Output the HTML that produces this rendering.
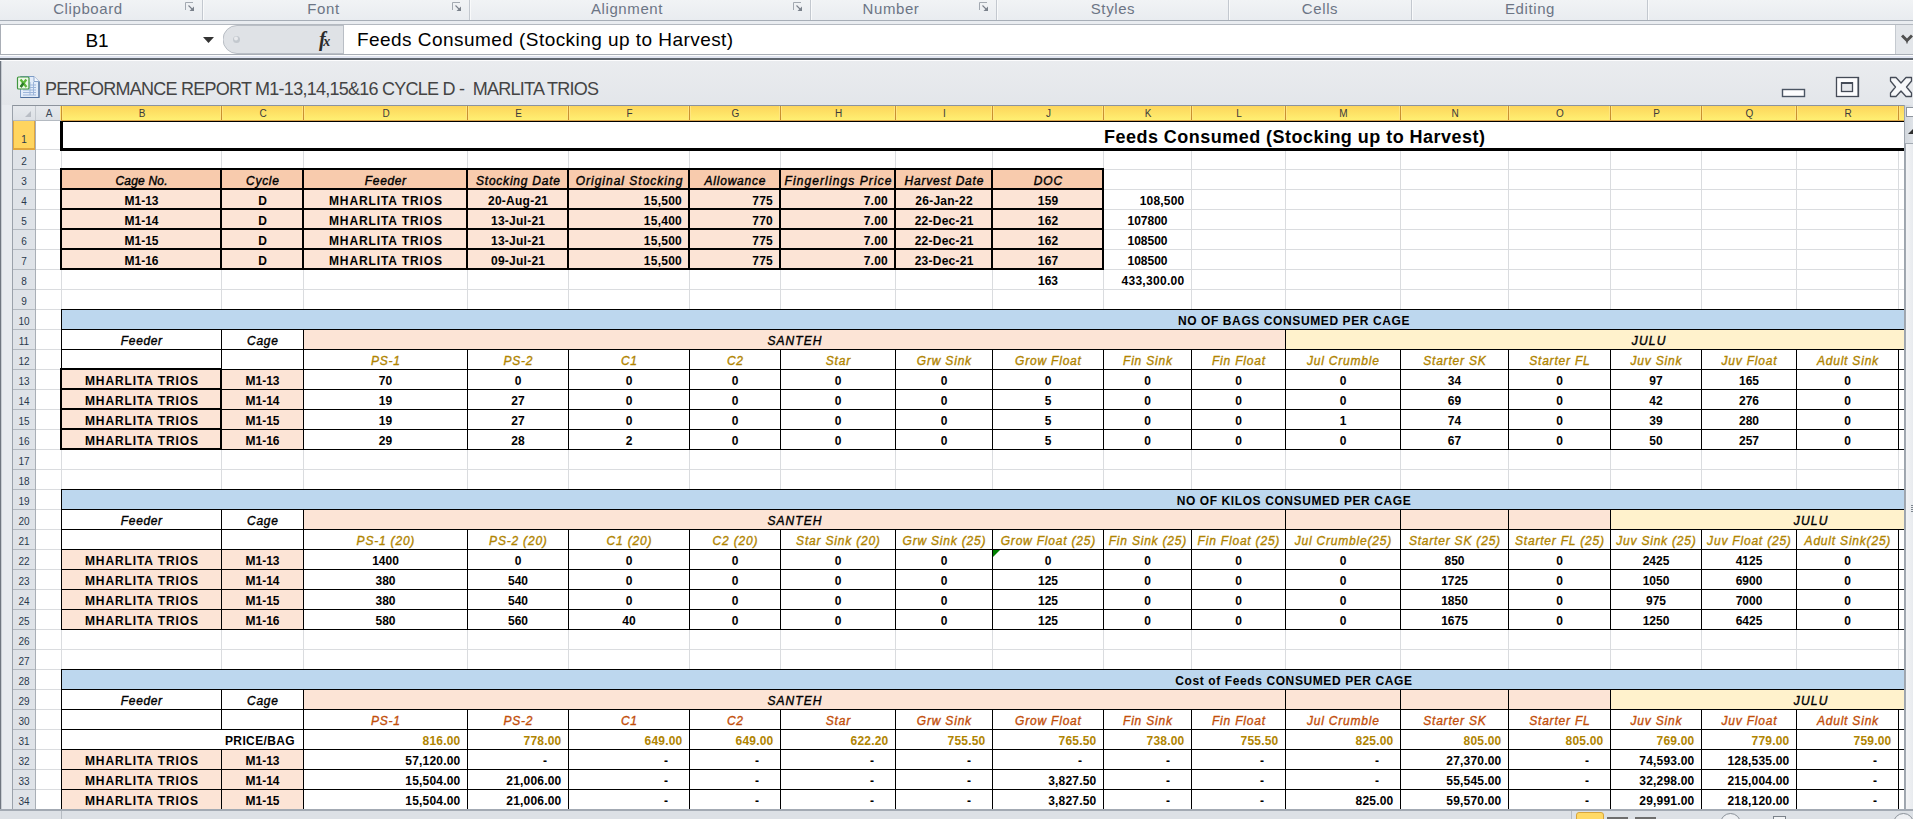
<!DOCTYPE html><html><head><meta charset="utf-8"><style>
html,body{margin:0;padding:0;overflow:hidden;}
body{width:1913px;height:819px;overflow:hidden;position:relative;background:#e8ebef;font-family:"Liberation Sans",sans-serif;}
div{position:absolute;}
.t{white-space:nowrap;overflow:visible;}
</style></head><body>
<div style="left:0;top:0;width:1913px;height:20px;background:linear-gradient(#f1f3f5,#e9ecf0);"></div>
<div style="left:0px;top:20px;width:1913px;height:1px;background:#a7aeb7;"></div>
<div style="left:0px;top:21px;width:1913px;height:3px;background:#e9ecf0;"></div>
<div class="t" style="left:-12px;top:-1.3px;width:200px;height:20px;line-height:20px;text-align:center;font-size:15px;color:#6c7585;letter-spacing:0.6px;">Clipboard</div>
<div class="t" style="left:223.5px;top:-1.3px;width:200px;height:20px;line-height:20px;text-align:center;font-size:15px;color:#6c7585;letter-spacing:0.6px;">Font</div>
<div class="t" style="left:527px;top:-1.3px;width:200px;height:20px;line-height:20px;text-align:center;font-size:15px;color:#6c7585;letter-spacing:0.6px;">Alignment</div>
<div class="t" style="left:791px;top:-1.3px;width:200px;height:20px;line-height:20px;text-align:center;font-size:15px;color:#6c7585;letter-spacing:0.6px;">Number</div>
<div class="t" style="left:1013px;top:-1.3px;width:200px;height:20px;line-height:20px;text-align:center;font-size:15px;color:#6c7585;letter-spacing:0.6px;">Styles</div>
<div class="t" style="left:1220px;top:-1.3px;width:200px;height:20px;line-height:20px;text-align:center;font-size:15px;color:#6c7585;letter-spacing:0.6px;">Cells</div>
<div class="t" style="left:1430px;top:-1.3px;width:200px;height:20px;line-height:20px;text-align:center;font-size:15px;color:#6c7585;letter-spacing:0.6px;">Editing</div>
<div style="left:202px;top:0px;width:1px;height:20px;background:#c3c8cf;"></div>
<div style="left:203px;top:0px;width:1px;height:20px;background:#f9fafb;"></div>
<div style="left:469px;top:0px;width:1px;height:20px;background:#c3c8cf;"></div>
<div style="left:470px;top:0px;width:1px;height:20px;background:#f9fafb;"></div>
<div style="left:810px;top:0px;width:1px;height:20px;background:#c3c8cf;"></div>
<div style="left:811px;top:0px;width:1px;height:20px;background:#f9fafb;"></div>
<div style="left:996px;top:0px;width:1px;height:20px;background:#c3c8cf;"></div>
<div style="left:997px;top:0px;width:1px;height:20px;background:#f9fafb;"></div>
<div style="left:1228px;top:0px;width:1px;height:20px;background:#c3c8cf;"></div>
<div style="left:1229px;top:0px;width:1px;height:20px;background:#f9fafb;"></div>
<div style="left:1411px;top:0px;width:1px;height:20px;background:#c3c8cf;"></div>
<div style="left:1412px;top:0px;width:1px;height:20px;background:#f9fafb;"></div>
<div style="left:1647px;top:0px;width:1px;height:20px;background:#c3c8cf;"></div>
<div style="left:1648px;top:0px;width:1px;height:20px;background:#f9fafb;"></div>
<svg style="position:absolute;left:185px;top:2px" width="10" height="10" viewBox="0 0 10 10"><path d="M0.5 8V0.5H8" fill="none" stroke="#a3a9b1" stroke-width="1"/><path d="M3.5 3.5L7 7" fill="none" stroke="#7a818b" stroke-width="1.1"/><path d="M9 4.5V9H4.5Z" fill="#7a818b"/></svg>
<svg style="position:absolute;left:452px;top:2px" width="10" height="10" viewBox="0 0 10 10"><path d="M0.5 8V0.5H8" fill="none" stroke="#a3a9b1" stroke-width="1"/><path d="M3.5 3.5L7 7" fill="none" stroke="#7a818b" stroke-width="1.1"/><path d="M9 4.5V9H4.5Z" fill="#7a818b"/></svg>
<svg style="position:absolute;left:793px;top:2px" width="10" height="10" viewBox="0 0 10 10"><path d="M0.5 8V0.5H8" fill="none" stroke="#a3a9b1" stroke-width="1"/><path d="M3.5 3.5L7 7" fill="none" stroke="#7a818b" stroke-width="1.1"/><path d="M9 4.5V9H4.5Z" fill="#7a818b"/></svg>
<svg style="position:absolute;left:979px;top:2px" width="10" height="10" viewBox="0 0 10 10"><path d="M0.5 8V0.5H8" fill="none" stroke="#a3a9b1" stroke-width="1"/><path d="M3.5 3.5L7 7" fill="none" stroke="#7a818b" stroke-width="1.1"/><path d="M9 4.5V9H4.5Z" fill="#7a818b"/></svg>
<div style="left:0px;top:24px;width:1913px;height:1px;background:#b4b9c0;"></div>
<div style="left:0px;top:25px;width:1913px;height:29px;background:#ffffff;"></div>
<div style="left:0px;top:54px;width:1913px;height:1px;background:#a9aeb6;"></div>
<div style="left:0px;top:24px;width:1px;height:31px;background:#a9aeb6;"></div>
<div style="left:0px;top:55px;width:1913px;height:1px;background:#fbfcfd;"></div>
<div style="left:0px;top:56px;width:1913px;height:2px;background:#e0e4f0;"></div>
<div style="left:0px;top:58px;width:1913px;height:2px;background:#606770;"></div>
<div style="left:0px;top:60px;width:1913px;height:1px;background:#fdfdfe;"></div>
<div class="t" style="left:60px;top:29px;width:74px;height:24px;line-height:24px;text-align:center;font-size:19px;color:#000;">B1</div>
<svg style="position:absolute;left:202px;top:36px" width="13" height="8"><path d="M1 1H12L6.5 7Z" fill="#333"/></svg>
<svg style="position:absolute;left:223px;top:25px" width="121" height="29"><path d="M14 0.5H121V28.5H14A13.5 13.5 0 0 1 14 0.5Z" fill="#dfe2e6" stroke="#b9bec5" stroke-width="1"/><circle cx="13.5" cy="14.5" r="3.5" fill="#c3c8ce"/><circle cx="13" cy="13.5" r="2" fill="#e8eaed"/></svg>
<div style="left:343px;top:25px;width:1px;height:29px;background:#b9bec5;"></div>
<div class="t" style="left:319px;top:27px;width:24px;height:24px;line-height:24px;font-family:'Liberation Serif',serif;font-style:italic;font-weight:bold;font-size:20px;color:#2b2b2b;letter-spacing:-2.5px;">f<span style="font-size:14px">x</span></div>
<div class="t" style="left:357px;top:27px;width:600px;height:26px;line-height:26px;font-size:19px;color:#000;letter-spacing:0.45px;">Feeds Consumed (Stocking up to Harvest)</div>
<div style="left:1895px;top:25px;width:18px;height:29px;background:#e3e6ea;"></div>
<div style="left:1895px;top:25px;width:1px;height:29px;background:#c5cad0;"></div>
<svg style="position:absolute;left:1901px;top:34px" width="12" height="10"><path d="M1 1.5L6 6.5L11 1.5" fill="none" stroke="#505050" stroke-width="3"/><path d="M6 6V9.5" stroke="#505050" stroke-width="1.2"/></svg>
<div style="left:0;top:61px;width:1913px;height:44px;background:linear-gradient(#eaecef,#e3e6ea);"></div>
<div style="left:0px;top:61px;width:1px;height:758px;background:#6f7680;"></div>
<div style="left:1px;top:61px;width:1px;height:758px;background:#c8cdd3;"></div>
<svg style="position:absolute;left:14px;top:72px" width="30" height="30" viewBox="0 0 30 30">
<path d="M6.5 4.5H20L25 9.5V25.5H6.5Z" fill="#e3ecf9" stroke="#7d9cc6" stroke-width="1"/>
<path d="M25 9.5V25.5H6.5" fill="none" stroke="#4f6f9c" stroke-width="1.2"/>
<path d="M20 4.5V9.5H25" fill="#f4f7fc" stroke="#8aa5cb" stroke-width="1"/>
<path d="M16 10V23M19.5 10V23M9 18H22M9 20.5H22M9 23H22M16 13H22M16 15.5H22" stroke="#9cb5da" stroke-width="1"/>
<rect x="3.5" y="5" width="11.5" height="12" rx="1" fill="#eef8ea" stroke="#3f963f" stroke-width="1.2"/>
<path d="M6.5 7.5L12.5 15M12.3 7.5L6.7 15" stroke="#5cb83a" stroke-width="2.3"/>
<path d="M9.5 11L6.7 15" stroke="#2c7a2c" stroke-width="2.3"/>
</svg>
<div class="t" style="left:45px;top:75.5px;width:700px;height:26px;line-height:26px;font-size:18px;color:#444;letter-spacing:-0.75px;">PERFORMANCE REPORT M1-13,14,15&amp;16 CYCLE D -&nbsp; MARLITA TRIOS</div>
<svg style="position:absolute;left:1781px;top:88px" width="26" height="10"><rect x="1.5" y="1.5" width="22" height="7" fill="#fdfdfe" stroke="#4b5563" stroke-width="1.4"/></svg>
<svg style="position:absolute;left:1835px;top:76px" width="26" height="22"><rect x="1.5" y="1.5" width="22" height="19" fill="#fdfdfe" stroke="#454b57" stroke-width="1.3"/><rect x="22.5" y="1.5" width="1.5" height="19" fill="#454b57"/><rect x="6.5" y="6.8" width="11" height="8.7" fill="#e4e6ea" stroke="#454b57" stroke-width="1.3"/><rect x="6" y="6" width="12" height="2" fill="#454b57"/></svg>
<svg style="position:absolute;left:1888px;top:75px" width="25" height="24"><path d="M2.5 2.5H8L13 8L18 2.5H23.5V6L18.5 12L23.5 18V21.5H18L13 16L8 21.5H2.5V18L7.5 12L2.5 6Z" fill="#f7f8fa" stroke="#454b57" stroke-width="1.3" stroke-linejoin="round"/></svg>
<div style="left:12px;top:105px;width:1892px;height:1px;background:#8c939c;"></div>
<div style="left:12px;top:105px;width:1px;height:704px;background:#9aa1aa;"></div>
<div style="left:13px;top:121px;width:1891px;height:688px;background:#ffffff;"></div>
<div style="left:13px;top:106px;width:48px;height:14px;background:linear-gradient(#e6e9ed,#dde1e6);"></div>
<div style="left:61px;top:106px;width:1843px;height:14px;background:linear-gradient(#fdd55b,#ffef72);"></div>
<div style="left:13px;top:120px;width:48px;height:1px;background:#b4bac1;"></div>
<div style="left:61px;top:120px;width:1843px;height:1px;background:#d9a447;"></div>
<div style="left:35px;top:106px;width:1px;height:14px;background:#c4c9cf;"></div>
<div style="left:61px;top:106px;width:1px;height:14px;background:#c9912f;"></div>
<div style="left:60px;top:106px;width:1px;height:14px;background:#ffe680;"></div>
<div style="left:62px;top:106px;width:1px;height:14px;background:#ffe680;"></div>
<div style="left:221px;top:106px;width:1px;height:14px;background:#c9912f;"></div>
<div style="left:220px;top:106px;width:1px;height:14px;background:#ffe680;"></div>
<div style="left:222px;top:106px;width:1px;height:14px;background:#ffe680;"></div>
<div style="left:303px;top:106px;width:1px;height:14px;background:#c9912f;"></div>
<div style="left:302px;top:106px;width:1px;height:14px;background:#ffe680;"></div>
<div style="left:304px;top:106px;width:1px;height:14px;background:#ffe680;"></div>
<div style="left:467px;top:106px;width:1px;height:14px;background:#c9912f;"></div>
<div style="left:466px;top:106px;width:1px;height:14px;background:#ffe680;"></div>
<div style="left:468px;top:106px;width:1px;height:14px;background:#ffe680;"></div>
<div style="left:568px;top:106px;width:1px;height:14px;background:#c9912f;"></div>
<div style="left:567px;top:106px;width:1px;height:14px;background:#ffe680;"></div>
<div style="left:569px;top:106px;width:1px;height:14px;background:#ffe680;"></div>
<div style="left:689px;top:106px;width:1px;height:14px;background:#c9912f;"></div>
<div style="left:688px;top:106px;width:1px;height:14px;background:#ffe680;"></div>
<div style="left:690px;top:106px;width:1px;height:14px;background:#ffe680;"></div>
<div style="left:780px;top:106px;width:1px;height:14px;background:#c9912f;"></div>
<div style="left:779px;top:106px;width:1px;height:14px;background:#ffe680;"></div>
<div style="left:781px;top:106px;width:1px;height:14px;background:#ffe680;"></div>
<div style="left:895px;top:106px;width:1px;height:14px;background:#c9912f;"></div>
<div style="left:894px;top:106px;width:1px;height:14px;background:#ffe680;"></div>
<div style="left:896px;top:106px;width:1px;height:14px;background:#ffe680;"></div>
<div style="left:992px;top:106px;width:1px;height:14px;background:#c9912f;"></div>
<div style="left:991px;top:106px;width:1px;height:14px;background:#ffe680;"></div>
<div style="left:993px;top:106px;width:1px;height:14px;background:#ffe680;"></div>
<div style="left:1103px;top:106px;width:1px;height:14px;background:#c9912f;"></div>
<div style="left:1102px;top:106px;width:1px;height:14px;background:#ffe680;"></div>
<div style="left:1104px;top:106px;width:1px;height:14px;background:#ffe680;"></div>
<div style="left:1191px;top:106px;width:1px;height:14px;background:#c9912f;"></div>
<div style="left:1190px;top:106px;width:1px;height:14px;background:#ffe680;"></div>
<div style="left:1192px;top:106px;width:1px;height:14px;background:#ffe680;"></div>
<div style="left:1285px;top:106px;width:1px;height:14px;background:#c9912f;"></div>
<div style="left:1284px;top:106px;width:1px;height:14px;background:#ffe680;"></div>
<div style="left:1286px;top:106px;width:1px;height:14px;background:#ffe680;"></div>
<div style="left:1400px;top:106px;width:1px;height:14px;background:#c9912f;"></div>
<div style="left:1399px;top:106px;width:1px;height:14px;background:#ffe680;"></div>
<div style="left:1401px;top:106px;width:1px;height:14px;background:#ffe680;"></div>
<div style="left:1508px;top:106px;width:1px;height:14px;background:#c9912f;"></div>
<div style="left:1507px;top:106px;width:1px;height:14px;background:#ffe680;"></div>
<div style="left:1509px;top:106px;width:1px;height:14px;background:#ffe680;"></div>
<div style="left:1610px;top:106px;width:1px;height:14px;background:#c9912f;"></div>
<div style="left:1609px;top:106px;width:1px;height:14px;background:#ffe680;"></div>
<div style="left:1611px;top:106px;width:1px;height:14px;background:#ffe680;"></div>
<div style="left:1701px;top:106px;width:1px;height:14px;background:#c9912f;"></div>
<div style="left:1700px;top:106px;width:1px;height:14px;background:#ffe680;"></div>
<div style="left:1702px;top:106px;width:1px;height:14px;background:#ffe680;"></div>
<div style="left:1796px;top:106px;width:1px;height:14px;background:#c9912f;"></div>
<div style="left:1795px;top:106px;width:1px;height:14px;background:#ffe680;"></div>
<div style="left:1797px;top:106px;width:1px;height:14px;background:#ffe680;"></div>
<div style="left:1898px;top:106px;width:1px;height:14px;background:#c9912f;"></div>
<div style="left:1897px;top:106px;width:1px;height:14px;background:#ffe680;"></div>
<div style="left:1899px;top:106px;width:1px;height:14px;background:#ffe680;"></div>
<svg style="position:absolute;left:25px;top:111px" width="7" height="7"><path d="M6 0V6H0Z" fill="#b9bec5"/></svg>
<div class="t" style="left:36px;top:103.69px;width:26px;height:20px;line-height:20px;font-size:10px;text-align:center;color:#3b4656;">A</div>
<div class="t" style="left:62px;top:104.19px;width:160px;height:20px;line-height:20px;font-size:10px;text-align:center;color:#3b3b3b;">B</div>
<div class="t" style="left:222px;top:104.19px;width:82px;height:20px;line-height:20px;font-size:10px;text-align:center;color:#3b3b3b;">C</div>
<div class="t" style="left:304px;top:104.19px;width:164px;height:20px;line-height:20px;font-size:10px;text-align:center;color:#3b3b3b;">D</div>
<div class="t" style="left:468px;top:104.19px;width:101px;height:20px;line-height:20px;font-size:10px;text-align:center;color:#3b3b3b;">E</div>
<div class="t" style="left:569px;top:104.19px;width:121px;height:20px;line-height:20px;font-size:10px;text-align:center;color:#3b3b3b;">F</div>
<div class="t" style="left:690px;top:104.19px;width:91px;height:20px;line-height:20px;font-size:10px;text-align:center;color:#3b3b3b;">G</div>
<div class="t" style="left:781px;top:104.19px;width:115px;height:20px;line-height:20px;font-size:10px;text-align:center;color:#3b3b3b;">H</div>
<div class="t" style="left:896px;top:104.19px;width:97px;height:20px;line-height:20px;font-size:10px;text-align:center;color:#3b3b3b;">I</div>
<div class="t" style="left:993px;top:104.19px;width:111px;height:20px;line-height:20px;font-size:10px;text-align:center;color:#3b3b3b;">J</div>
<div class="t" style="left:1104px;top:104.19px;width:88px;height:20px;line-height:20px;font-size:10px;text-align:center;color:#3b3b3b;">K</div>
<div class="t" style="left:1192px;top:104.19px;width:94px;height:20px;line-height:20px;font-size:10px;text-align:center;color:#3b3b3b;">L</div>
<div class="t" style="left:1286px;top:104.19px;width:115px;height:20px;line-height:20px;font-size:10px;text-align:center;color:#3b3b3b;">M</div>
<div class="t" style="left:1401px;top:104.19px;width:108px;height:20px;line-height:20px;font-size:10px;text-align:center;color:#3b3b3b;">N</div>
<div class="t" style="left:1509px;top:104.19px;width:102px;height:20px;line-height:20px;font-size:10px;text-align:center;color:#3b3b3b;">O</div>
<div class="t" style="left:1611px;top:104.19px;width:91px;height:20px;line-height:20px;font-size:10px;text-align:center;color:#3b3b3b;">P</div>
<div class="t" style="left:1702px;top:104.19px;width:95px;height:20px;line-height:20px;font-size:10px;text-align:center;color:#3b3b3b;">Q</div>
<div class="t" style="left:1797px;top:104.19px;width:102px;height:20px;line-height:20px;font-size:10px;text-align:center;color:#3b3b3b;">R</div>
<div style="left:13px;top:121px;width:22px;height:688px;background:#dfe3e8;"></div>
<div style="left:35px;top:121px;width:1px;height:688px;background:#a9afb6;"></div>
<div style="left:13px;top:121px;width:22px;height:28px;background:#ffd55f;"></div>
<div style="left:13px;top:121px;width:1px;height:28px;background:#e0a53c;"></div>
<div style="left:34px;top:121px;width:1px;height:28px;background:#e0a53c;"></div>
<div style="left:13px;top:148px;width:22px;height:1px;background:#e0a53c;"></div>
<div style="left:13px;top:149px;width:22px;height:1px;background:#e0a53c;"></div>
<div class="t" style="left:13px;top:129.69px;width:22px;height:20px;line-height:20px;font-size:10px;text-align:center;color:#2a394c;">1</div>
<div style="left:13px;top:169px;width:22px;height:1px;background:#b3b9c0;"></div>
<div class="t" style="left:13px;top:151.69px;width:22px;height:20px;line-height:20px;font-size:10px;text-align:center;color:#2a394c;">2</div>
<div style="left:13px;top:189px;width:22px;height:1px;background:#b3b9c0;"></div>
<div class="t" style="left:13px;top:171.69px;width:22px;height:20px;line-height:20px;font-size:10px;text-align:center;color:#2a394c;">3</div>
<div style="left:13px;top:209px;width:22px;height:1px;background:#b3b9c0;"></div>
<div class="t" style="left:13px;top:191.69px;width:22px;height:20px;line-height:20px;font-size:10px;text-align:center;color:#2a394c;">4</div>
<div style="left:13px;top:229px;width:22px;height:1px;background:#b3b9c0;"></div>
<div class="t" style="left:13px;top:211.69px;width:22px;height:20px;line-height:20px;font-size:10px;text-align:center;color:#2a394c;">5</div>
<div style="left:13px;top:249px;width:22px;height:1px;background:#b3b9c0;"></div>
<div class="t" style="left:13px;top:231.69px;width:22px;height:20px;line-height:20px;font-size:10px;text-align:center;color:#2a394c;">6</div>
<div style="left:13px;top:269px;width:22px;height:1px;background:#b3b9c0;"></div>
<div class="t" style="left:13px;top:251.69px;width:22px;height:20px;line-height:20px;font-size:10px;text-align:center;color:#2a394c;">7</div>
<div style="left:13px;top:289px;width:22px;height:1px;background:#b3b9c0;"></div>
<div class="t" style="left:13px;top:271.69px;width:22px;height:20px;line-height:20px;font-size:10px;text-align:center;color:#2a394c;">8</div>
<div style="left:13px;top:309px;width:22px;height:1px;background:#b3b9c0;"></div>
<div class="t" style="left:13px;top:291.69px;width:22px;height:20px;line-height:20px;font-size:10px;text-align:center;color:#2a394c;">9</div>
<div style="left:13px;top:329px;width:22px;height:1px;background:#b3b9c0;"></div>
<div class="t" style="left:13px;top:311.69px;width:22px;height:20px;line-height:20px;font-size:10px;text-align:center;color:#2a394c;">10</div>
<div style="left:13px;top:349px;width:22px;height:1px;background:#b3b9c0;"></div>
<div class="t" style="left:13px;top:331.69px;width:22px;height:20px;line-height:20px;font-size:10px;text-align:center;color:#2a394c;">11</div>
<div style="left:13px;top:369px;width:22px;height:1px;background:#b3b9c0;"></div>
<div class="t" style="left:13px;top:351.69px;width:22px;height:20px;line-height:20px;font-size:10px;text-align:center;color:#2a394c;">12</div>
<div style="left:13px;top:389px;width:22px;height:1px;background:#b3b9c0;"></div>
<div class="t" style="left:13px;top:371.69px;width:22px;height:20px;line-height:20px;font-size:10px;text-align:center;color:#2a394c;">13</div>
<div style="left:13px;top:409px;width:22px;height:1px;background:#b3b9c0;"></div>
<div class="t" style="left:13px;top:391.69px;width:22px;height:20px;line-height:20px;font-size:10px;text-align:center;color:#2a394c;">14</div>
<div style="left:13px;top:429px;width:22px;height:1px;background:#b3b9c0;"></div>
<div class="t" style="left:13px;top:411.69px;width:22px;height:20px;line-height:20px;font-size:10px;text-align:center;color:#2a394c;">15</div>
<div style="left:13px;top:449px;width:22px;height:1px;background:#b3b9c0;"></div>
<div class="t" style="left:13px;top:431.69px;width:22px;height:20px;line-height:20px;font-size:10px;text-align:center;color:#2a394c;">16</div>
<div style="left:13px;top:469px;width:22px;height:1px;background:#b3b9c0;"></div>
<div class="t" style="left:13px;top:451.69px;width:22px;height:20px;line-height:20px;font-size:10px;text-align:center;color:#2a394c;">17</div>
<div style="left:13px;top:489px;width:22px;height:1px;background:#b3b9c0;"></div>
<div class="t" style="left:13px;top:471.69px;width:22px;height:20px;line-height:20px;font-size:10px;text-align:center;color:#2a394c;">18</div>
<div style="left:13px;top:509px;width:22px;height:1px;background:#b3b9c0;"></div>
<div class="t" style="left:13px;top:491.69px;width:22px;height:20px;line-height:20px;font-size:10px;text-align:center;color:#2a394c;">19</div>
<div style="left:13px;top:529px;width:22px;height:1px;background:#b3b9c0;"></div>
<div class="t" style="left:13px;top:511.69px;width:22px;height:20px;line-height:20px;font-size:10px;text-align:center;color:#2a394c;">20</div>
<div style="left:13px;top:549px;width:22px;height:1px;background:#b3b9c0;"></div>
<div class="t" style="left:13px;top:531.70px;width:22px;height:20px;line-height:20px;font-size:10px;text-align:center;color:#2a394c;">21</div>
<div style="left:13px;top:569px;width:22px;height:1px;background:#b3b9c0;"></div>
<div class="t" style="left:13px;top:551.70px;width:22px;height:20px;line-height:20px;font-size:10px;text-align:center;color:#2a394c;">22</div>
<div style="left:13px;top:589px;width:22px;height:1px;background:#b3b9c0;"></div>
<div class="t" style="left:13px;top:571.70px;width:22px;height:20px;line-height:20px;font-size:10px;text-align:center;color:#2a394c;">23</div>
<div style="left:13px;top:609px;width:22px;height:1px;background:#b3b9c0;"></div>
<div class="t" style="left:13px;top:591.70px;width:22px;height:20px;line-height:20px;font-size:10px;text-align:center;color:#2a394c;">24</div>
<div style="left:13px;top:629px;width:22px;height:1px;background:#b3b9c0;"></div>
<div class="t" style="left:13px;top:611.70px;width:22px;height:20px;line-height:20px;font-size:10px;text-align:center;color:#2a394c;">25</div>
<div style="left:13px;top:649px;width:22px;height:1px;background:#b3b9c0;"></div>
<div class="t" style="left:13px;top:631.70px;width:22px;height:20px;line-height:20px;font-size:10px;text-align:center;color:#2a394c;">26</div>
<div style="left:13px;top:669px;width:22px;height:1px;background:#b3b9c0;"></div>
<div class="t" style="left:13px;top:651.70px;width:22px;height:20px;line-height:20px;font-size:10px;text-align:center;color:#2a394c;">27</div>
<div style="left:13px;top:689px;width:22px;height:1px;background:#b3b9c0;"></div>
<div class="t" style="left:13px;top:671.70px;width:22px;height:20px;line-height:20px;font-size:10px;text-align:center;color:#2a394c;">28</div>
<div style="left:13px;top:709px;width:22px;height:1px;background:#b3b9c0;"></div>
<div class="t" style="left:13px;top:691.70px;width:22px;height:20px;line-height:20px;font-size:10px;text-align:center;color:#2a394c;">29</div>
<div style="left:13px;top:729px;width:22px;height:1px;background:#b3b9c0;"></div>
<div class="t" style="left:13px;top:711.70px;width:22px;height:20px;line-height:20px;font-size:10px;text-align:center;color:#2a394c;">30</div>
<div style="left:13px;top:749px;width:22px;height:1px;background:#b3b9c0;"></div>
<div class="t" style="left:13px;top:731.70px;width:22px;height:20px;line-height:20px;font-size:10px;text-align:center;color:#2a394c;">31</div>
<div style="left:13px;top:769px;width:22px;height:1px;background:#b3b9c0;"></div>
<div class="t" style="left:13px;top:751.70px;width:22px;height:20px;line-height:20px;font-size:10px;text-align:center;color:#2a394c;">32</div>
<div style="left:13px;top:789px;width:22px;height:1px;background:#b3b9c0;"></div>
<div class="t" style="left:13px;top:771.70px;width:22px;height:20px;line-height:20px;font-size:10px;text-align:center;color:#2a394c;">33</div>
<div style="left:13px;top:809px;width:22px;height:1px;background:#b3b9c0;"></div>
<div class="t" style="left:13px;top:791.70px;width:22px;height:20px;line-height:20px;font-size:10px;text-align:center;color:#2a394c;">34</div>
<div style="left:61px;top:121px;width:1px;height:688px;background:#dadcdf;"></div>
<div style="left:221px;top:121px;width:1px;height:688px;background:#dadcdf;"></div>
<div style="left:303px;top:121px;width:1px;height:688px;background:#dadcdf;"></div>
<div style="left:467px;top:121px;width:1px;height:688px;background:#dadcdf;"></div>
<div style="left:568px;top:121px;width:1px;height:688px;background:#dadcdf;"></div>
<div style="left:689px;top:121px;width:1px;height:688px;background:#dadcdf;"></div>
<div style="left:780px;top:121px;width:1px;height:688px;background:#dadcdf;"></div>
<div style="left:895px;top:121px;width:1px;height:688px;background:#dadcdf;"></div>
<div style="left:992px;top:121px;width:1px;height:688px;background:#dadcdf;"></div>
<div style="left:1103px;top:121px;width:1px;height:688px;background:#dadcdf;"></div>
<div style="left:1191px;top:121px;width:1px;height:688px;background:#dadcdf;"></div>
<div style="left:1285px;top:121px;width:1px;height:688px;background:#dadcdf;"></div>
<div style="left:1400px;top:121px;width:1px;height:688px;background:#dadcdf;"></div>
<div style="left:1508px;top:121px;width:1px;height:688px;background:#dadcdf;"></div>
<div style="left:1610px;top:121px;width:1px;height:688px;background:#dadcdf;"></div>
<div style="left:1701px;top:121px;width:1px;height:688px;background:#dadcdf;"></div>
<div style="left:1796px;top:121px;width:1px;height:688px;background:#dadcdf;"></div>
<div style="left:1898px;top:121px;width:1px;height:688px;background:#dadcdf;"></div>
<div style="left:36px;top:149px;width:1868px;height:1px;background:#dadcdf;"></div>
<div style="left:36px;top:169px;width:1868px;height:1px;background:#dadcdf;"></div>
<div style="left:36px;top:189px;width:1868px;height:1px;background:#dadcdf;"></div>
<div style="left:36px;top:209px;width:1868px;height:1px;background:#dadcdf;"></div>
<div style="left:36px;top:229px;width:1868px;height:1px;background:#dadcdf;"></div>
<div style="left:36px;top:249px;width:1868px;height:1px;background:#dadcdf;"></div>
<div style="left:36px;top:269px;width:1868px;height:1px;background:#dadcdf;"></div>
<div style="left:36px;top:289px;width:1868px;height:1px;background:#dadcdf;"></div>
<div style="left:36px;top:309px;width:1868px;height:1px;background:#dadcdf;"></div>
<div style="left:36px;top:329px;width:1868px;height:1px;background:#dadcdf;"></div>
<div style="left:36px;top:349px;width:1868px;height:1px;background:#dadcdf;"></div>
<div style="left:36px;top:369px;width:1868px;height:1px;background:#dadcdf;"></div>
<div style="left:36px;top:389px;width:1868px;height:1px;background:#dadcdf;"></div>
<div style="left:36px;top:409px;width:1868px;height:1px;background:#dadcdf;"></div>
<div style="left:36px;top:429px;width:1868px;height:1px;background:#dadcdf;"></div>
<div style="left:36px;top:449px;width:1868px;height:1px;background:#dadcdf;"></div>
<div style="left:36px;top:469px;width:1868px;height:1px;background:#dadcdf;"></div>
<div style="left:36px;top:489px;width:1868px;height:1px;background:#dadcdf;"></div>
<div style="left:36px;top:509px;width:1868px;height:1px;background:#dadcdf;"></div>
<div style="left:36px;top:529px;width:1868px;height:1px;background:#dadcdf;"></div>
<div style="left:36px;top:549px;width:1868px;height:1px;background:#dadcdf;"></div>
<div style="left:36px;top:569px;width:1868px;height:1px;background:#dadcdf;"></div>
<div style="left:36px;top:589px;width:1868px;height:1px;background:#dadcdf;"></div>
<div style="left:36px;top:609px;width:1868px;height:1px;background:#dadcdf;"></div>
<div style="left:36px;top:629px;width:1868px;height:1px;background:#dadcdf;"></div>
<div style="left:36px;top:649px;width:1868px;height:1px;background:#dadcdf;"></div>
<div style="left:36px;top:669px;width:1868px;height:1px;background:#dadcdf;"></div>
<div style="left:36px;top:689px;width:1868px;height:1px;background:#dadcdf;"></div>
<div style="left:36px;top:709px;width:1868px;height:1px;background:#dadcdf;"></div>
<div style="left:36px;top:729px;width:1868px;height:1px;background:#dadcdf;"></div>
<div style="left:36px;top:749px;width:1868px;height:1px;background:#dadcdf;"></div>
<div style="left:36px;top:769px;width:1868px;height:1px;background:#dadcdf;"></div>
<div style="left:36px;top:789px;width:1868px;height:1px;background:#dadcdf;"></div>
<div style="left:36px;top:809px;width:1868px;height:1px;background:#dadcdf;"></div>
<div style="left:62px;top:122px;width:1842px;height:27px;background:#ffffff;"></div>
<div style="left:62px;top:730px;width:241px;height:19px;background:#ffffff;"></div>
<div style="left:62px;top:170px;width:1041px;height:19px;background:#f8cbad;"></div>
<div style="left:62px;top:190px;width:1041px;height:79px;background:#fce4d6;"></div>
<div style="left:62px;top:310px;width:1842px;height:19px;background:#bdd7ee;"></div>
<div style="left:62px;top:490px;width:1842px;height:19px;background:#bdd7ee;"></div>
<div style="left:62px;top:670px;width:1842px;height:19px;background:#bdd7ee;"></div>
<div style="left:304px;top:330px;width:981px;height:19px;background:#fce4d6;"></div>
<div style="left:1286px;top:330px;width:618px;height:19px;background:#fff2cc;"></div>
<div style="left:304px;top:510px;width:1306px;height:19px;background:#fce4d6;"></div>
<div style="left:1611px;top:510px;width:293px;height:19px;background:#fff2cc;"></div>
<div style="left:304px;top:690px;width:1306px;height:19px;background:#fce4d6;"></div>
<div style="left:1611px;top:690px;width:293px;height:19px;background:#fff2cc;"></div>
<div style="left:62px;top:370px;width:241px;height:79px;background:#fce4d6;"></div>
<div style="left:62px;top:550px;width:241px;height:79px;background:#fce4d6;"></div>
<div style="left:62px;top:750px;width:241px;height:59px;background:#fce4d6;"></div>
<div style="left:60px;top:121px;width:1844px;height:1px;background:#000;"></div>
<div style="left:60px;top:148px;width:1844px;height:3px;background:#000;"></div>
<div style="left:60px;top:121px;width:3px;height:30px;background:#000;"></div>
<div style="left:60px;top:168px;width:1044px;height:2px;background:#000;"></div>
<div style="left:60px;top:188px;width:1044px;height:2px;background:#000;"></div>
<div style="left:60px;top:208px;width:1044px;height:2px;background:#000;"></div>
<div style="left:60px;top:228px;width:1044px;height:2px;background:#000;"></div>
<div style="left:60px;top:248px;width:1044px;height:2px;background:#000;"></div>
<div style="left:60px;top:268px;width:1044px;height:2px;background:#000;"></div>
<div style="left:60px;top:168px;width:2px;height:102px;background:#000;"></div>
<div style="left:220px;top:168px;width:2px;height:102px;background:#000;"></div>
<div style="left:302px;top:168px;width:2px;height:102px;background:#000;"></div>
<div style="left:466px;top:168px;width:2px;height:102px;background:#000;"></div>
<div style="left:567px;top:168px;width:2px;height:102px;background:#000;"></div>
<div style="left:688px;top:168px;width:2px;height:102px;background:#000;"></div>
<div style="left:779px;top:168px;width:2px;height:102px;background:#000;"></div>
<div style="left:894px;top:168px;width:2px;height:102px;background:#000;"></div>
<div style="left:991px;top:168px;width:2px;height:102px;background:#000;"></div>
<div style="left:1102px;top:168px;width:2px;height:102px;background:#000;"></div>
<div style="left:61px;top:309px;width:1843px;height:1px;background:#000;"></div>
<div style="left:61px;top:329px;width:1843px;height:1px;background:#000;"></div>
<div style="left:61px;top:349px;width:1843px;height:1px;background:#000;"></div>
<div style="left:61px;top:369px;width:1843px;height:1px;background:#000;"></div>
<div style="left:61px;top:389px;width:1843px;height:1px;background:#000;"></div>
<div style="left:61px;top:409px;width:1843px;height:1px;background:#000;"></div>
<div style="left:61px;top:429px;width:1843px;height:1px;background:#000;"></div>
<div style="left:61px;top:449px;width:1843px;height:1px;background:#000;"></div>
<div style="left:61px;top:309px;width:1px;height:141px;background:#000;"></div>
<div style="left:221px;top:329px;width:1px;height:21px;background:#000;"></div>
<div style="left:303px;top:329px;width:1px;height:21px;background:#000;"></div>
<div style="left:221px;top:349px;width:1px;height:21px;background:#000;"></div>
<div style="left:303px;top:349px;width:1px;height:21px;background:#000;"></div>
<div style="left:221px;top:369px;width:1px;height:21px;background:#000;"></div>
<div style="left:303px;top:369px;width:1px;height:21px;background:#000;"></div>
<div style="left:221px;top:389px;width:1px;height:21px;background:#000;"></div>
<div style="left:303px;top:389px;width:1px;height:21px;background:#000;"></div>
<div style="left:221px;top:409px;width:1px;height:21px;background:#000;"></div>
<div style="left:303px;top:409px;width:1px;height:21px;background:#000;"></div>
<div style="left:221px;top:429px;width:1px;height:21px;background:#000;"></div>
<div style="left:303px;top:429px;width:1px;height:21px;background:#000;"></div>
<div style="left:1285px;top:329px;width:1px;height:21px;background:#000;"></div>
<div style="left:467px;top:349px;width:1px;height:101px;background:#000;"></div>
<div style="left:568px;top:349px;width:1px;height:101px;background:#000;"></div>
<div style="left:689px;top:349px;width:1px;height:101px;background:#000;"></div>
<div style="left:780px;top:349px;width:1px;height:101px;background:#000;"></div>
<div style="left:895px;top:349px;width:1px;height:101px;background:#000;"></div>
<div style="left:992px;top:349px;width:1px;height:101px;background:#000;"></div>
<div style="left:1103px;top:349px;width:1px;height:101px;background:#000;"></div>
<div style="left:1191px;top:349px;width:1px;height:101px;background:#000;"></div>
<div style="left:1285px;top:349px;width:1px;height:101px;background:#000;"></div>
<div style="left:1400px;top:349px;width:1px;height:101px;background:#000;"></div>
<div style="left:1508px;top:349px;width:1px;height:101px;background:#000;"></div>
<div style="left:1610px;top:349px;width:1px;height:101px;background:#000;"></div>
<div style="left:1701px;top:349px;width:1px;height:101px;background:#000;"></div>
<div style="left:1796px;top:349px;width:1px;height:101px;background:#000;"></div>
<div style="left:1898px;top:349px;width:1px;height:101px;background:#000;"></div>
<div style="left:61px;top:489px;width:1843px;height:1px;background:#000;"></div>
<div style="left:61px;top:509px;width:1843px;height:1px;background:#000;"></div>
<div style="left:61px;top:529px;width:1843px;height:1px;background:#000;"></div>
<div style="left:61px;top:549px;width:1843px;height:1px;background:#000;"></div>
<div style="left:61px;top:569px;width:1843px;height:1px;background:#000;"></div>
<div style="left:61px;top:589px;width:1843px;height:1px;background:#000;"></div>
<div style="left:61px;top:609px;width:1843px;height:1px;background:#000;"></div>
<div style="left:61px;top:629px;width:1843px;height:1px;background:#000;"></div>
<div style="left:61px;top:489px;width:1px;height:141px;background:#000;"></div>
<div style="left:221px;top:509px;width:1px;height:21px;background:#000;"></div>
<div style="left:303px;top:509px;width:1px;height:21px;background:#000;"></div>
<div style="left:221px;top:529px;width:1px;height:21px;background:#000;"></div>
<div style="left:303px;top:529px;width:1px;height:21px;background:#000;"></div>
<div style="left:221px;top:549px;width:1px;height:21px;background:#000;"></div>
<div style="left:303px;top:549px;width:1px;height:21px;background:#000;"></div>
<div style="left:221px;top:569px;width:1px;height:21px;background:#000;"></div>
<div style="left:303px;top:569px;width:1px;height:21px;background:#000;"></div>
<div style="left:221px;top:589px;width:1px;height:21px;background:#000;"></div>
<div style="left:303px;top:589px;width:1px;height:21px;background:#000;"></div>
<div style="left:221px;top:609px;width:1px;height:21px;background:#000;"></div>
<div style="left:303px;top:609px;width:1px;height:21px;background:#000;"></div>
<div style="left:1285px;top:509px;width:1px;height:21px;background:#000;"></div>
<div style="left:1400px;top:509px;width:1px;height:21px;background:#000;"></div>
<div style="left:1508px;top:509px;width:1px;height:21px;background:#000;"></div>
<div style="left:1610px;top:509px;width:1px;height:21px;background:#000;"></div>
<div style="left:467px;top:529px;width:1px;height:101px;background:#000;"></div>
<div style="left:568px;top:529px;width:1px;height:101px;background:#000;"></div>
<div style="left:689px;top:529px;width:1px;height:101px;background:#000;"></div>
<div style="left:780px;top:529px;width:1px;height:101px;background:#000;"></div>
<div style="left:895px;top:529px;width:1px;height:101px;background:#000;"></div>
<div style="left:992px;top:529px;width:1px;height:101px;background:#000;"></div>
<div style="left:1103px;top:529px;width:1px;height:101px;background:#000;"></div>
<div style="left:1191px;top:529px;width:1px;height:101px;background:#000;"></div>
<div style="left:1285px;top:529px;width:1px;height:101px;background:#000;"></div>
<div style="left:1400px;top:529px;width:1px;height:101px;background:#000;"></div>
<div style="left:1508px;top:529px;width:1px;height:101px;background:#000;"></div>
<div style="left:1610px;top:529px;width:1px;height:101px;background:#000;"></div>
<div style="left:1701px;top:529px;width:1px;height:101px;background:#000;"></div>
<div style="left:1796px;top:529px;width:1px;height:101px;background:#000;"></div>
<div style="left:1898px;top:529px;width:1px;height:101px;background:#000;"></div>
<div style="left:61px;top:669px;width:1843px;height:1px;background:#000;"></div>
<div style="left:61px;top:689px;width:1843px;height:1px;background:#000;"></div>
<div style="left:61px;top:709px;width:1843px;height:1px;background:#000;"></div>
<div style="left:61px;top:729px;width:1843px;height:1px;background:#000;"></div>
<div style="left:61px;top:749px;width:1843px;height:1px;background:#000;"></div>
<div style="left:61px;top:769px;width:1843px;height:1px;background:#000;"></div>
<div style="left:61px;top:789px;width:1843px;height:1px;background:#000;"></div>
<div style="left:61px;top:809px;width:1843px;height:1px;background:#000;"></div>
<div style="left:61px;top:669px;width:1px;height:141px;background:#000;"></div>
<div style="left:221px;top:689px;width:1px;height:21px;background:#000;"></div>
<div style="left:303px;top:689px;width:1px;height:21px;background:#000;"></div>
<div style="left:221px;top:709px;width:1px;height:21px;background:#000;"></div>
<div style="left:303px;top:709px;width:1px;height:21px;background:#000;"></div>
<div style="left:303px;top:729px;width:1px;height:21px;background:#000;"></div>
<div style="left:221px;top:749px;width:1px;height:21px;background:#000;"></div>
<div style="left:303px;top:749px;width:1px;height:21px;background:#000;"></div>
<div style="left:221px;top:769px;width:1px;height:21px;background:#000;"></div>
<div style="left:303px;top:769px;width:1px;height:21px;background:#000;"></div>
<div style="left:221px;top:789px;width:1px;height:21px;background:#000;"></div>
<div style="left:303px;top:789px;width:1px;height:21px;background:#000;"></div>
<div style="left:1285px;top:689px;width:1px;height:21px;background:#000;"></div>
<div style="left:1400px;top:689px;width:1px;height:21px;background:#000;"></div>
<div style="left:1508px;top:689px;width:1px;height:21px;background:#000;"></div>
<div style="left:1610px;top:689px;width:1px;height:21px;background:#000;"></div>
<div style="left:467px;top:709px;width:1px;height:101px;background:#000;"></div>
<div style="left:568px;top:709px;width:1px;height:101px;background:#000;"></div>
<div style="left:689px;top:709px;width:1px;height:101px;background:#000;"></div>
<div style="left:780px;top:709px;width:1px;height:101px;background:#000;"></div>
<div style="left:895px;top:709px;width:1px;height:101px;background:#000;"></div>
<div style="left:992px;top:709px;width:1px;height:101px;background:#000;"></div>
<div style="left:1103px;top:709px;width:1px;height:101px;background:#000;"></div>
<div style="left:1191px;top:709px;width:1px;height:101px;background:#000;"></div>
<div style="left:1285px;top:709px;width:1px;height:101px;background:#000;"></div>
<div style="left:1400px;top:709px;width:1px;height:101px;background:#000;"></div>
<div style="left:1508px;top:709px;width:1px;height:101px;background:#000;"></div>
<div style="left:1610px;top:709px;width:1px;height:101px;background:#000;"></div>
<div style="left:1701px;top:709px;width:1px;height:101px;background:#000;"></div>
<div style="left:1796px;top:709px;width:1px;height:101px;background:#000;"></div>
<div style="left:1898px;top:709px;width:1px;height:101px;background:#000;"></div>
<div style="left:60px;top:368px;width:162px;height:2px;background:#000;"></div>
<div style="left:60px;top:388px;width:162px;height:2px;background:#000;"></div>
<div style="left:60px;top:408px;width:162px;height:2px;background:#000;"></div>
<div style="left:60px;top:428px;width:162px;height:2px;background:#000;"></div>
<div style="left:60px;top:448px;width:162px;height:2px;background:#000;"></div>
<div style="left:60px;top:368px;width:2px;height:82px;background:#000;"></div>
<div style="left:220px;top:368px;width:2px;height:82px;background:#000;"></div>
<div class="t" style="left:1104px;top:126.65px;width:396px;height:20px;line-height:20px;font-size:18px;text-align:left;color:#000;font-weight:bold;letter-spacing:0.47px;">Feeds Consumed (Stocking up to Harvest)</div>
<div class="t" style="left:61.6px;top:171.03px;width:160.0px;height:20px;line-height:20px;font-size:12px;text-align:center;color:#000;font-style:italic;letter-spacing:0.2px;-webkit-text-stroke:0.4px #000;">Cage No.</div>
<div class="t" style="left:221.85px;top:171.03px;width:82.00000000000003px;height:20px;line-height:20px;font-size:12px;text-align:center;color:#000;font-style:italic;letter-spacing:0.7px;-webkit-text-stroke:0.4px #000;">Cycle</div>
<div class="t" style="left:303.825px;top:171.03px;width:164.0px;height:20px;line-height:20px;font-size:12px;text-align:center;color:#000;font-style:italic;letter-spacing:0.65px;-webkit-text-stroke:0.4px #000;">Feeder</div>
<div class="t" style="left:467.885px;top:171.03px;width:101.0px;height:20px;line-height:20px;font-size:12px;text-align:center;color:#000;font-style:italic;letter-spacing:0.77px;-webkit-text-stroke:0.4px #000;">Stocking Date</div>
<div class="t" style="left:569.0px;top:171.03px;width:121.0px;height:20px;line-height:20px;font-size:12px;text-align:center;color:#000;font-style:italic;letter-spacing:1.0px;-webkit-text-stroke:0.4px #000;">Original Stocking</div>
<div class="t" style="left:689.9px;top:171.03px;width:91.0px;height:20px;line-height:20px;font-size:12px;text-align:center;color:#000;font-style:italic;letter-spacing:0.8px;-webkit-text-stroke:0.4px #000;">Allowance</div>
<div class="t" style="left:781.05px;top:171.03px;width:115.0px;height:20px;line-height:20px;font-size:12px;text-align:center;color:#000;font-style:italic;letter-spacing:1.1px;-webkit-text-stroke:0.4px #000;">Fingerlings Price</div>
<div class="t" style="left:895.9px;top:171.03px;width:97.0px;height:20px;line-height:20px;font-size:12px;text-align:center;color:#000;font-style:italic;letter-spacing:0.8px;-webkit-text-stroke:0.4px #000;">Harvest Date</div>
<div class="t" style="left:992.9px;top:171.03px;width:111.00000000000011px;height:20px;line-height:20px;font-size:12px;text-align:center;color:#000;font-style:italic;letter-spacing:0.8px;-webkit-text-stroke:0.4px #000;">DOC</div>
<div class="t" style="left:61.5px;top:191.03px;width:160.0px;height:20px;line-height:20px;font-size:12px;text-align:center;color:#000;font-weight:bold;">M1-13</div>
<div class="t" style="left:221.625px;top:191.03px;width:82.0px;height:20px;line-height:20px;font-size:12px;text-align:center;color:#000;font-weight:bold;letter-spacing:0.25px;">D</div>
<div class="t" style="left:303.95px;top:191.03px;width:164.0px;height:20px;line-height:20px;font-size:12px;text-align:center;color:#000;font-weight:bold;letter-spacing:0.9px;">MHARLITA TRIOS</div>
<div class="t" style="left:467.625px;top:191.03px;width:101.0px;height:20px;line-height:20px;font-size:12px;text-align:center;color:#000;font-weight:bold;letter-spacing:0.25px;">20-Aug-21</div>
<div class="t" style="left:568px;top:191.03px;width:121px;height:20px;line-height:20px;font-size:12px;text-align:right;color:#000;font-weight:bold;padding-right:7px;box-sizing:border-box;letter-spacing:0.25px;">15,500</div>
<div class="t" style="left:689px;top:191.03px;width:91px;height:20px;line-height:20px;font-size:12px;text-align:right;color:#000;font-weight:bold;padding-right:7px;box-sizing:border-box;letter-spacing:0.25px;">775</div>
<div class="t" style="left:780px;top:191.03px;width:115px;height:20px;line-height:20px;font-size:12px;text-align:right;color:#000;font-weight:bold;padding-right:7px;box-sizing:border-box;letter-spacing:0.25px;">7.00</div>
<div class="t" style="left:895.625px;top:191.03px;width:97.0px;height:20px;line-height:20px;font-size:12px;text-align:center;color:#000;font-weight:bold;letter-spacing:0.25px;">26-Jan-22</div>
<div class="t" style="left:992.625px;top:191.03px;width:111.0px;height:20px;line-height:20px;font-size:12px;text-align:center;color:#000;font-weight:bold;letter-spacing:0.25px;">159</div>
<div class="t" style="left:61.5px;top:211.03px;width:160.0px;height:20px;line-height:20px;font-size:12px;text-align:center;color:#000;font-weight:bold;">M1-14</div>
<div class="t" style="left:221.625px;top:211.03px;width:82.0px;height:20px;line-height:20px;font-size:12px;text-align:center;color:#000;font-weight:bold;letter-spacing:0.25px;">D</div>
<div class="t" style="left:303.95px;top:211.03px;width:164.0px;height:20px;line-height:20px;font-size:12px;text-align:center;color:#000;font-weight:bold;letter-spacing:0.9px;">MHARLITA TRIOS</div>
<div class="t" style="left:467.625px;top:211.03px;width:101.0px;height:20px;line-height:20px;font-size:12px;text-align:center;color:#000;font-weight:bold;letter-spacing:0.25px;">13-Jul-21</div>
<div class="t" style="left:568px;top:211.03px;width:121px;height:20px;line-height:20px;font-size:12px;text-align:right;color:#000;font-weight:bold;padding-right:7px;box-sizing:border-box;letter-spacing:0.25px;">15,400</div>
<div class="t" style="left:689px;top:211.03px;width:91px;height:20px;line-height:20px;font-size:12px;text-align:right;color:#000;font-weight:bold;padding-right:7px;box-sizing:border-box;letter-spacing:0.25px;">770</div>
<div class="t" style="left:780px;top:211.03px;width:115px;height:20px;line-height:20px;font-size:12px;text-align:right;color:#000;font-weight:bold;padding-right:7px;box-sizing:border-box;letter-spacing:0.25px;">7.00</div>
<div class="t" style="left:895.625px;top:211.03px;width:97.0px;height:20px;line-height:20px;font-size:12px;text-align:center;color:#000;font-weight:bold;letter-spacing:0.25px;">22-Dec-21</div>
<div class="t" style="left:992.625px;top:211.03px;width:111.0px;height:20px;line-height:20px;font-size:12px;text-align:center;color:#000;font-weight:bold;letter-spacing:0.25px;">162</div>
<div class="t" style="left:61.5px;top:231.03px;width:160.0px;height:20px;line-height:20px;font-size:12px;text-align:center;color:#000;font-weight:bold;">M1-15</div>
<div class="t" style="left:221.625px;top:231.03px;width:82.0px;height:20px;line-height:20px;font-size:12px;text-align:center;color:#000;font-weight:bold;letter-spacing:0.25px;">D</div>
<div class="t" style="left:303.95px;top:231.03px;width:164.0px;height:20px;line-height:20px;font-size:12px;text-align:center;color:#000;font-weight:bold;letter-spacing:0.9px;">MHARLITA TRIOS</div>
<div class="t" style="left:467.625px;top:231.03px;width:101.0px;height:20px;line-height:20px;font-size:12px;text-align:center;color:#000;font-weight:bold;letter-spacing:0.25px;">13-Jul-21</div>
<div class="t" style="left:568px;top:231.03px;width:121px;height:20px;line-height:20px;font-size:12px;text-align:right;color:#000;font-weight:bold;padding-right:7px;box-sizing:border-box;letter-spacing:0.25px;">15,500</div>
<div class="t" style="left:689px;top:231.03px;width:91px;height:20px;line-height:20px;font-size:12px;text-align:right;color:#000;font-weight:bold;padding-right:7px;box-sizing:border-box;letter-spacing:0.25px;">775</div>
<div class="t" style="left:780px;top:231.03px;width:115px;height:20px;line-height:20px;font-size:12px;text-align:right;color:#000;font-weight:bold;padding-right:7px;box-sizing:border-box;letter-spacing:0.25px;">7.00</div>
<div class="t" style="left:895.625px;top:231.03px;width:97.0px;height:20px;line-height:20px;font-size:12px;text-align:center;color:#000;font-weight:bold;letter-spacing:0.25px;">22-Dec-21</div>
<div class="t" style="left:992.625px;top:231.03px;width:111.0px;height:20px;line-height:20px;font-size:12px;text-align:center;color:#000;font-weight:bold;letter-spacing:0.25px;">162</div>
<div class="t" style="left:61.5px;top:251.03px;width:160.0px;height:20px;line-height:20px;font-size:12px;text-align:center;color:#000;font-weight:bold;">M1-16</div>
<div class="t" style="left:221.625px;top:251.03px;width:82.0px;height:20px;line-height:20px;font-size:12px;text-align:center;color:#000;font-weight:bold;letter-spacing:0.25px;">D</div>
<div class="t" style="left:303.95px;top:251.03px;width:164.0px;height:20px;line-height:20px;font-size:12px;text-align:center;color:#000;font-weight:bold;letter-spacing:0.9px;">MHARLITA TRIOS</div>
<div class="t" style="left:467.625px;top:251.03px;width:101.0px;height:20px;line-height:20px;font-size:12px;text-align:center;color:#000;font-weight:bold;letter-spacing:0.25px;">09-Jul-21</div>
<div class="t" style="left:568px;top:251.03px;width:121px;height:20px;line-height:20px;font-size:12px;text-align:right;color:#000;font-weight:bold;padding-right:7px;box-sizing:border-box;letter-spacing:0.25px;">15,500</div>
<div class="t" style="left:689px;top:251.03px;width:91px;height:20px;line-height:20px;font-size:12px;text-align:right;color:#000;font-weight:bold;padding-right:7px;box-sizing:border-box;letter-spacing:0.25px;">775</div>
<div class="t" style="left:780px;top:251.03px;width:115px;height:20px;line-height:20px;font-size:12px;text-align:right;color:#000;font-weight:bold;padding-right:7px;box-sizing:border-box;letter-spacing:0.25px;">7.00</div>
<div class="t" style="left:895.625px;top:251.03px;width:97.0px;height:20px;line-height:20px;font-size:12px;text-align:center;color:#000;font-weight:bold;letter-spacing:0.25px;">23-Dec-21</div>
<div class="t" style="left:992.625px;top:251.03px;width:111.0px;height:20px;line-height:20px;font-size:12px;text-align:center;color:#000;font-weight:bold;letter-spacing:0.25px;">167</div>
<div class="t" style="left:1103px;top:191.03px;width:88px;height:20px;line-height:20px;font-size:12px;text-align:right;color:#000;font-weight:bold;padding-right:6.5px;box-sizing:border-box;letter-spacing:0.2px;">108,500</div>
<div class="t" style="left:1103.5px;top:211.03px;width:88.0px;height:20px;line-height:20px;font-size:12px;text-align:center;color:#000;font-weight:bold;">107800</div>
<div class="t" style="left:1103.5px;top:231.03px;width:88.0px;height:20px;line-height:20px;font-size:12px;text-align:center;color:#000;font-weight:bold;">108500</div>
<div class="t" style="left:1103.5px;top:251.03px;width:88.0px;height:20px;line-height:20px;font-size:12px;text-align:center;color:#000;font-weight:bold;">108500</div>
<div class="t" style="left:992.5px;top:271.03px;width:111.0px;height:20px;line-height:20px;font-size:12px;text-align:center;color:#000;font-weight:bold;">163</div>
<div class="t" style="left:1103px;top:271.03px;width:88px;height:20px;line-height:20px;font-size:12px;text-align:right;color:#000;font-weight:bold;padding-right:6.5px;box-sizing:border-box;letter-spacing:0.3px;">433,300.00</div>
<div class="t" style="left:61.5px;top:311.03px;width:1843.0px;height:20px;line-height:20px;font-size:12px;text-align:center;color:#000;font-weight:bold;"></div>
<div class="t" style="left:1094px;top:311.03px;width:400px;height:20px;line-height:20px;font-size:12px;font-weight:bold;text-align:center;letter-spacing:0.6px;">NO OF BAGS CONSUMED PER CAGE</div>
<div class="t" style="left:61.825px;top:331.03px;width:160.0px;height:20px;line-height:20px;font-size:12px;text-align:center;color:#000;font-style:italic;letter-spacing:0.65px;-webkit-text-stroke:0.4px #000;">Feeder</div>
<div class="t" style="left:221.85px;top:331.03px;width:82.00000000000003px;height:20px;line-height:20px;font-size:12px;text-align:center;color:#000;font-style:italic;letter-spacing:0.7px;-webkit-text-stroke:0.4px #000;">Cage</div>
<div class="t" style="left:304.025px;top:331.03px;width:982.0000000000001px;height:20px;line-height:20px;font-size:12px;text-align:center;color:#000;font-style:italic;letter-spacing:1.05px;-webkit-text-stroke:0.4px #000;">SANTEH</div>
<div class="t" style="left:1589.1px;top:331.03px;width:120.0px;height:20px;line-height:20px;font-size:12px;text-align:center;color:#000;font-style:italic;letter-spacing:1.2px;-webkit-text-stroke:0.4px #000;">JULU</div>
<div class="t" style="left:303.9px;top:351.03px;width:164.0px;height:20px;line-height:20px;font-size:12px;text-align:center;color:#b08400;font-style:italic;letter-spacing:0.8px;-webkit-text-stroke:0.35px #b08400;">PS-1</div>
<div class="t" style="left:467.9px;top:351.03px;width:101.0px;height:20px;line-height:20px;font-size:12px;text-align:center;color:#b08400;font-style:italic;letter-spacing:0.8px;-webkit-text-stroke:0.35px #b08400;">PS-2</div>
<div class="t" style="left:568.9px;top:351.03px;width:121.0px;height:20px;line-height:20px;font-size:12px;text-align:center;color:#b08400;font-style:italic;letter-spacing:0.8px;-webkit-text-stroke:0.35px #b08400;">C1</div>
<div class="t" style="left:689.9px;top:351.03px;width:91.0px;height:20px;line-height:20px;font-size:12px;text-align:center;color:#b08400;font-style:italic;letter-spacing:0.8px;-webkit-text-stroke:0.35px #b08400;">C2</div>
<div class="t" style="left:780.9px;top:351.03px;width:115.0px;height:20px;line-height:20px;font-size:12px;text-align:center;color:#b08400;font-style:italic;letter-spacing:0.8px;-webkit-text-stroke:0.35px #b08400;">Star</div>
<div class="t" style="left:895.9px;top:351.03px;width:97.0px;height:20px;line-height:20px;font-size:12px;text-align:center;color:#b08400;font-style:italic;letter-spacing:0.8px;-webkit-text-stroke:0.35px #b08400;">Grw Sink</div>
<div class="t" style="left:992.9px;top:351.03px;width:111.00000000000011px;height:20px;line-height:20px;font-size:12px;text-align:center;color:#b08400;font-style:italic;letter-spacing:0.8px;-webkit-text-stroke:0.35px #b08400;">Grow Float</div>
<div class="t" style="left:1103.9px;top:351.03px;width:88.0px;height:20px;line-height:20px;font-size:12px;text-align:center;color:#b08400;font-style:italic;letter-spacing:0.8px;-webkit-text-stroke:0.35px #b08400;">Fin Sink</div>
<div class="t" style="left:1191.9px;top:351.03px;width:94.0px;height:20px;line-height:20px;font-size:12px;text-align:center;color:#b08400;font-style:italic;letter-spacing:0.8px;-webkit-text-stroke:0.35px #b08400;">Fin Float</div>
<div class="t" style="left:1285.9px;top:351.03px;width:115.0px;height:20px;line-height:20px;font-size:12px;text-align:center;color:#b08400;font-style:italic;letter-spacing:0.8px;-webkit-text-stroke:0.35px #b08400;">Jul Crumble</div>
<div class="t" style="left:1400.9px;top:351.03px;width:108.0px;height:20px;line-height:20px;font-size:12px;text-align:center;color:#b08400;font-style:italic;letter-spacing:0.8px;-webkit-text-stroke:0.35px #b08400;">Starter SK</div>
<div class="t" style="left:1508.9px;top:351.03px;width:102.0px;height:20px;line-height:20px;font-size:12px;text-align:center;color:#b08400;font-style:italic;letter-spacing:0.8px;-webkit-text-stroke:0.35px #b08400;">Starter FL</div>
<div class="t" style="left:1610.9px;top:351.03px;width:91.0px;height:20px;line-height:20px;font-size:12px;text-align:center;color:#b08400;font-style:italic;letter-spacing:0.8px;-webkit-text-stroke:0.35px #b08400;">Juv Sink</div>
<div class="t" style="left:1701.9px;top:351.03px;width:95.0px;height:20px;line-height:20px;font-size:12px;text-align:center;color:#b08400;font-style:italic;letter-spacing:0.8px;-webkit-text-stroke:0.35px #b08400;">Juv Float</div>
<div class="t" style="left:1796.9px;top:351.03px;width:102.0px;height:20px;line-height:20px;font-size:12px;text-align:center;color:#b08400;font-style:italic;letter-spacing:0.8px;-webkit-text-stroke:0.35px #b08400;">Adult Sink</div>
<div class="t" style="left:61.95px;top:371.03px;width:160.0px;height:20px;line-height:20px;font-size:12px;text-align:center;color:#000;font-weight:bold;letter-spacing:0.9px;">MHARLITA TRIOS</div>
<div class="t" style="left:221.5px;top:371.03px;width:82.0px;height:20px;line-height:20px;font-size:12px;text-align:center;color:#000;font-weight:bold;">M1-13</div>
<div class="t" style="left:303.5px;top:371.03px;width:164.0px;height:20px;line-height:20px;font-size:12px;text-align:center;color:#000;font-weight:bold;">70</div>
<div class="t" style="left:467.5px;top:371.03px;width:101.0px;height:20px;line-height:20px;font-size:12px;text-align:center;color:#000;font-weight:bold;">0</div>
<div class="t" style="left:568.5px;top:371.03px;width:121.0px;height:20px;line-height:20px;font-size:12px;text-align:center;color:#000;font-weight:bold;">0</div>
<div class="t" style="left:689.5px;top:371.03px;width:91.0px;height:20px;line-height:20px;font-size:12px;text-align:center;color:#000;font-weight:bold;">0</div>
<div class="t" style="left:780.5px;top:371.03px;width:115.0px;height:20px;line-height:20px;font-size:12px;text-align:center;color:#000;font-weight:bold;">0</div>
<div class="t" style="left:895.5px;top:371.03px;width:97.0px;height:20px;line-height:20px;font-size:12px;text-align:center;color:#000;font-weight:bold;">0</div>
<div class="t" style="left:992.5px;top:371.03px;width:111.0px;height:20px;line-height:20px;font-size:12px;text-align:center;color:#000;font-weight:bold;">0</div>
<div class="t" style="left:1103.5px;top:371.03px;width:88.0px;height:20px;line-height:20px;font-size:12px;text-align:center;color:#000;font-weight:bold;">0</div>
<div class="t" style="left:1191.5px;top:371.03px;width:94.0px;height:20px;line-height:20px;font-size:12px;text-align:center;color:#000;font-weight:bold;">0</div>
<div class="t" style="left:1285.5px;top:371.03px;width:115.0px;height:20px;line-height:20px;font-size:12px;text-align:center;color:#000;font-weight:bold;">0</div>
<div class="t" style="left:1400.5px;top:371.03px;width:108.0px;height:20px;line-height:20px;font-size:12px;text-align:center;color:#000;font-weight:bold;">34</div>
<div class="t" style="left:1508.5px;top:371.03px;width:102.0px;height:20px;line-height:20px;font-size:12px;text-align:center;color:#000;font-weight:bold;">0</div>
<div class="t" style="left:1610.5px;top:371.03px;width:91.0px;height:20px;line-height:20px;font-size:12px;text-align:center;color:#000;font-weight:bold;">97</div>
<div class="t" style="left:1701.5px;top:371.03px;width:95.0px;height:20px;line-height:20px;font-size:12px;text-align:center;color:#000;font-weight:bold;">165</div>
<div class="t" style="left:1796.5px;top:371.03px;width:102.0px;height:20px;line-height:20px;font-size:12px;text-align:center;color:#000;font-weight:bold;">0</div>
<div class="t" style="left:61.95px;top:391.03px;width:160.0px;height:20px;line-height:20px;font-size:12px;text-align:center;color:#000;font-weight:bold;letter-spacing:0.9px;">MHARLITA TRIOS</div>
<div class="t" style="left:221.5px;top:391.03px;width:82.0px;height:20px;line-height:20px;font-size:12px;text-align:center;color:#000;font-weight:bold;">M1-14</div>
<div class="t" style="left:303.5px;top:391.03px;width:164.0px;height:20px;line-height:20px;font-size:12px;text-align:center;color:#000;font-weight:bold;">19</div>
<div class="t" style="left:467.5px;top:391.03px;width:101.0px;height:20px;line-height:20px;font-size:12px;text-align:center;color:#000;font-weight:bold;">27</div>
<div class="t" style="left:568.5px;top:391.03px;width:121.0px;height:20px;line-height:20px;font-size:12px;text-align:center;color:#000;font-weight:bold;">0</div>
<div class="t" style="left:689.5px;top:391.03px;width:91.0px;height:20px;line-height:20px;font-size:12px;text-align:center;color:#000;font-weight:bold;">0</div>
<div class="t" style="left:780.5px;top:391.03px;width:115.0px;height:20px;line-height:20px;font-size:12px;text-align:center;color:#000;font-weight:bold;">0</div>
<div class="t" style="left:895.5px;top:391.03px;width:97.0px;height:20px;line-height:20px;font-size:12px;text-align:center;color:#000;font-weight:bold;">0</div>
<div class="t" style="left:992.5px;top:391.03px;width:111.0px;height:20px;line-height:20px;font-size:12px;text-align:center;color:#000;font-weight:bold;">5</div>
<div class="t" style="left:1103.5px;top:391.03px;width:88.0px;height:20px;line-height:20px;font-size:12px;text-align:center;color:#000;font-weight:bold;">0</div>
<div class="t" style="left:1191.5px;top:391.03px;width:94.0px;height:20px;line-height:20px;font-size:12px;text-align:center;color:#000;font-weight:bold;">0</div>
<div class="t" style="left:1285.5px;top:391.03px;width:115.0px;height:20px;line-height:20px;font-size:12px;text-align:center;color:#000;font-weight:bold;">0</div>
<div class="t" style="left:1400.5px;top:391.03px;width:108.0px;height:20px;line-height:20px;font-size:12px;text-align:center;color:#000;font-weight:bold;">69</div>
<div class="t" style="left:1508.5px;top:391.03px;width:102.0px;height:20px;line-height:20px;font-size:12px;text-align:center;color:#000;font-weight:bold;">0</div>
<div class="t" style="left:1610.5px;top:391.03px;width:91.0px;height:20px;line-height:20px;font-size:12px;text-align:center;color:#000;font-weight:bold;">42</div>
<div class="t" style="left:1701.5px;top:391.03px;width:95.0px;height:20px;line-height:20px;font-size:12px;text-align:center;color:#000;font-weight:bold;">276</div>
<div class="t" style="left:1796.5px;top:391.03px;width:102.0px;height:20px;line-height:20px;font-size:12px;text-align:center;color:#000;font-weight:bold;">0</div>
<div class="t" style="left:61.95px;top:411.03px;width:160.0px;height:20px;line-height:20px;font-size:12px;text-align:center;color:#000;font-weight:bold;letter-spacing:0.9px;">MHARLITA TRIOS</div>
<div class="t" style="left:221.5px;top:411.03px;width:82.0px;height:20px;line-height:20px;font-size:12px;text-align:center;color:#000;font-weight:bold;">M1-15</div>
<div class="t" style="left:303.5px;top:411.03px;width:164.0px;height:20px;line-height:20px;font-size:12px;text-align:center;color:#000;font-weight:bold;">19</div>
<div class="t" style="left:467.5px;top:411.03px;width:101.0px;height:20px;line-height:20px;font-size:12px;text-align:center;color:#000;font-weight:bold;">27</div>
<div class="t" style="left:568.5px;top:411.03px;width:121.0px;height:20px;line-height:20px;font-size:12px;text-align:center;color:#000;font-weight:bold;">0</div>
<div class="t" style="left:689.5px;top:411.03px;width:91.0px;height:20px;line-height:20px;font-size:12px;text-align:center;color:#000;font-weight:bold;">0</div>
<div class="t" style="left:780.5px;top:411.03px;width:115.0px;height:20px;line-height:20px;font-size:12px;text-align:center;color:#000;font-weight:bold;">0</div>
<div class="t" style="left:895.5px;top:411.03px;width:97.0px;height:20px;line-height:20px;font-size:12px;text-align:center;color:#000;font-weight:bold;">0</div>
<div class="t" style="left:992.5px;top:411.03px;width:111.0px;height:20px;line-height:20px;font-size:12px;text-align:center;color:#000;font-weight:bold;">5</div>
<div class="t" style="left:1103.5px;top:411.03px;width:88.0px;height:20px;line-height:20px;font-size:12px;text-align:center;color:#000;font-weight:bold;">0</div>
<div class="t" style="left:1191.5px;top:411.03px;width:94.0px;height:20px;line-height:20px;font-size:12px;text-align:center;color:#000;font-weight:bold;">0</div>
<div class="t" style="left:1285.5px;top:411.03px;width:115.0px;height:20px;line-height:20px;font-size:12px;text-align:center;color:#000;font-weight:bold;">1</div>
<div class="t" style="left:1400.5px;top:411.03px;width:108.0px;height:20px;line-height:20px;font-size:12px;text-align:center;color:#000;font-weight:bold;">74</div>
<div class="t" style="left:1508.5px;top:411.03px;width:102.0px;height:20px;line-height:20px;font-size:12px;text-align:center;color:#000;font-weight:bold;">0</div>
<div class="t" style="left:1610.5px;top:411.03px;width:91.0px;height:20px;line-height:20px;font-size:12px;text-align:center;color:#000;font-weight:bold;">39</div>
<div class="t" style="left:1701.5px;top:411.03px;width:95.0px;height:20px;line-height:20px;font-size:12px;text-align:center;color:#000;font-weight:bold;">280</div>
<div class="t" style="left:1796.5px;top:411.03px;width:102.0px;height:20px;line-height:20px;font-size:12px;text-align:center;color:#000;font-weight:bold;">0</div>
<div class="t" style="left:61.95px;top:431.03px;width:160.0px;height:20px;line-height:20px;font-size:12px;text-align:center;color:#000;font-weight:bold;letter-spacing:0.9px;">MHARLITA TRIOS</div>
<div class="t" style="left:221.5px;top:431.03px;width:82.0px;height:20px;line-height:20px;font-size:12px;text-align:center;color:#000;font-weight:bold;">M1-16</div>
<div class="t" style="left:303.5px;top:431.03px;width:164.0px;height:20px;line-height:20px;font-size:12px;text-align:center;color:#000;font-weight:bold;">29</div>
<div class="t" style="left:467.5px;top:431.03px;width:101.0px;height:20px;line-height:20px;font-size:12px;text-align:center;color:#000;font-weight:bold;">28</div>
<div class="t" style="left:568.5px;top:431.03px;width:121.0px;height:20px;line-height:20px;font-size:12px;text-align:center;color:#000;font-weight:bold;">2</div>
<div class="t" style="left:689.5px;top:431.03px;width:91.0px;height:20px;line-height:20px;font-size:12px;text-align:center;color:#000;font-weight:bold;">0</div>
<div class="t" style="left:780.5px;top:431.03px;width:115.0px;height:20px;line-height:20px;font-size:12px;text-align:center;color:#000;font-weight:bold;">0</div>
<div class="t" style="left:895.5px;top:431.03px;width:97.0px;height:20px;line-height:20px;font-size:12px;text-align:center;color:#000;font-weight:bold;">0</div>
<div class="t" style="left:992.5px;top:431.03px;width:111.0px;height:20px;line-height:20px;font-size:12px;text-align:center;color:#000;font-weight:bold;">5</div>
<div class="t" style="left:1103.5px;top:431.03px;width:88.0px;height:20px;line-height:20px;font-size:12px;text-align:center;color:#000;font-weight:bold;">0</div>
<div class="t" style="left:1191.5px;top:431.03px;width:94.0px;height:20px;line-height:20px;font-size:12px;text-align:center;color:#000;font-weight:bold;">0</div>
<div class="t" style="left:1285.5px;top:431.03px;width:115.0px;height:20px;line-height:20px;font-size:12px;text-align:center;color:#000;font-weight:bold;">0</div>
<div class="t" style="left:1400.5px;top:431.03px;width:108.0px;height:20px;line-height:20px;font-size:12px;text-align:center;color:#000;font-weight:bold;">67</div>
<div class="t" style="left:1508.5px;top:431.03px;width:102.0px;height:20px;line-height:20px;font-size:12px;text-align:center;color:#000;font-weight:bold;">0</div>
<div class="t" style="left:1610.5px;top:431.03px;width:91.0px;height:20px;line-height:20px;font-size:12px;text-align:center;color:#000;font-weight:bold;">50</div>
<div class="t" style="left:1701.5px;top:431.03px;width:95.0px;height:20px;line-height:20px;font-size:12px;text-align:center;color:#000;font-weight:bold;">257</div>
<div class="t" style="left:1796.5px;top:431.03px;width:102.0px;height:20px;line-height:20px;font-size:12px;text-align:center;color:#000;font-weight:bold;">0</div>
<div class="t" style="left:61.5px;top:491.03px;width:1843.0px;height:20px;line-height:20px;font-size:12px;text-align:center;color:#000;font-weight:bold;"></div>
<div class="t" style="left:1094px;top:491.03px;width:400px;height:20px;line-height:20px;font-size:12px;font-weight:bold;text-align:center;letter-spacing:0.6px;">NO OF KILOS CONSUMED PER CAGE</div>
<div class="t" style="left:61.825px;top:511.03px;width:160.0px;height:20px;line-height:20px;font-size:12px;text-align:center;color:#000;font-style:italic;letter-spacing:0.65px;-webkit-text-stroke:0.4px #000;">Feeder</div>
<div class="t" style="left:221.85px;top:511.03px;width:82.00000000000003px;height:20px;line-height:20px;font-size:12px;text-align:center;color:#000;font-style:italic;letter-spacing:0.7px;-webkit-text-stroke:0.4px #000;">Cage</div>
<div class="t" style="left:304.025px;top:511.03px;width:982.0000000000001px;height:20px;line-height:20px;font-size:12px;text-align:center;color:#000;font-style:italic;letter-spacing:1.05px;-webkit-text-stroke:0.4px #000;">SANTEH</div>
<div class="t" style="left:1751.1px;top:511.03px;width:120.0px;height:20px;line-height:20px;font-size:12px;text-align:center;color:#000;font-style:italic;letter-spacing:1.2px;-webkit-text-stroke:0.4px #000;">JULU</div>
<div class="t" style="left:303.9px;top:531.03px;width:164.0px;height:20px;line-height:20px;font-size:12px;text-align:center;color:#b08400;font-style:italic;letter-spacing:0.8px;-webkit-text-stroke:0.35px #b08400;">PS-1 (20)</div>
<div class="t" style="left:467.9px;top:531.03px;width:101.0px;height:20px;line-height:20px;font-size:12px;text-align:center;color:#b08400;font-style:italic;letter-spacing:0.8px;-webkit-text-stroke:0.35px #b08400;">PS-2 (20)</div>
<div class="t" style="left:568.9px;top:531.03px;width:121.0px;height:20px;line-height:20px;font-size:12px;text-align:center;color:#b08400;font-style:italic;letter-spacing:0.8px;-webkit-text-stroke:0.35px #b08400;">C1 (20)</div>
<div class="t" style="left:689.9px;top:531.03px;width:91.0px;height:20px;line-height:20px;font-size:12px;text-align:center;color:#b08400;font-style:italic;letter-spacing:0.8px;-webkit-text-stroke:0.35px #b08400;">C2 (20)</div>
<div class="t" style="left:780.9px;top:531.03px;width:115.0px;height:20px;line-height:20px;font-size:12px;text-align:center;color:#b08400;font-style:italic;letter-spacing:0.8px;-webkit-text-stroke:0.35px #b08400;">Star Sink (20)</div>
<div class="t" style="left:895.9px;top:531.03px;width:97.0px;height:20px;line-height:20px;font-size:12px;text-align:center;color:#b08400;font-style:italic;letter-spacing:0.8px;-webkit-text-stroke:0.35px #b08400;">Grw Sink (25)</div>
<div class="t" style="left:992.9px;top:531.03px;width:111.00000000000011px;height:20px;line-height:20px;font-size:12px;text-align:center;color:#b08400;font-style:italic;letter-spacing:0.8px;-webkit-text-stroke:0.35px #b08400;">Grow Float (25)</div>
<div class="t" style="left:1103.9px;top:531.03px;width:88.0px;height:20px;line-height:20px;font-size:12px;text-align:center;color:#b08400;font-style:italic;letter-spacing:0.8px;-webkit-text-stroke:0.35px #b08400;">Fin Sink (25)</div>
<div class="t" style="left:1191.9px;top:531.03px;width:94.0px;height:20px;line-height:20px;font-size:12px;text-align:center;color:#b08400;font-style:italic;letter-spacing:0.8px;-webkit-text-stroke:0.35px #b08400;">Fin Float (25)</div>
<div class="t" style="left:1285.9px;top:531.03px;width:115.0px;height:20px;line-height:20px;font-size:12px;text-align:center;color:#b08400;font-style:italic;letter-spacing:0.8px;-webkit-text-stroke:0.35px #b08400;">Jul Crumble(25)</div>
<div class="t" style="left:1400.9px;top:531.03px;width:108.0px;height:20px;line-height:20px;font-size:12px;text-align:center;color:#b08400;font-style:italic;letter-spacing:0.8px;-webkit-text-stroke:0.35px #b08400;">Starter SK (25)</div>
<div class="t" style="left:1508.9px;top:531.03px;width:102.0px;height:20px;line-height:20px;font-size:12px;text-align:center;color:#b08400;font-style:italic;letter-spacing:0.8px;-webkit-text-stroke:0.35px #b08400;">Starter FL (25)</div>
<div class="t" style="left:1610.9px;top:531.03px;width:91.0px;height:20px;line-height:20px;font-size:12px;text-align:center;color:#b08400;font-style:italic;letter-spacing:0.8px;-webkit-text-stroke:0.35px #b08400;">Juv Sink (25)</div>
<div class="t" style="left:1701.9px;top:531.03px;width:95.0px;height:20px;line-height:20px;font-size:12px;text-align:center;color:#b08400;font-style:italic;letter-spacing:0.8px;-webkit-text-stroke:0.35px #b08400;">Juv Float (25)</div>
<div class="t" style="left:1796.9px;top:531.03px;width:102.0px;height:20px;line-height:20px;font-size:12px;text-align:center;color:#b08400;font-style:italic;letter-spacing:0.8px;-webkit-text-stroke:0.35px #b08400;">Adult Sink(25)</div>
<div class="t" style="left:61.95px;top:551.03px;width:160.0px;height:20px;line-height:20px;font-size:12px;text-align:center;color:#000;font-weight:bold;letter-spacing:0.9px;">MHARLITA TRIOS</div>
<div class="t" style="left:221.5px;top:551.03px;width:82.0px;height:20px;line-height:20px;font-size:12px;text-align:center;color:#000;font-weight:bold;">M1-13</div>
<div class="t" style="left:303.5px;top:551.03px;width:164.0px;height:20px;line-height:20px;font-size:12px;text-align:center;color:#000;font-weight:bold;">1400</div>
<div class="t" style="left:467.5px;top:551.03px;width:101.0px;height:20px;line-height:20px;font-size:12px;text-align:center;color:#000;font-weight:bold;">0</div>
<div class="t" style="left:568.5px;top:551.03px;width:121.0px;height:20px;line-height:20px;font-size:12px;text-align:center;color:#000;font-weight:bold;">0</div>
<div class="t" style="left:689.5px;top:551.03px;width:91.0px;height:20px;line-height:20px;font-size:12px;text-align:center;color:#000;font-weight:bold;">0</div>
<div class="t" style="left:780.5px;top:551.03px;width:115.0px;height:20px;line-height:20px;font-size:12px;text-align:center;color:#000;font-weight:bold;">0</div>
<div class="t" style="left:895.5px;top:551.03px;width:97.0px;height:20px;line-height:20px;font-size:12px;text-align:center;color:#000;font-weight:bold;">0</div>
<div class="t" style="left:992.5px;top:551.03px;width:111.0px;height:20px;line-height:20px;font-size:12px;text-align:center;color:#000;font-weight:bold;">0</div>
<div class="t" style="left:1103.5px;top:551.03px;width:88.0px;height:20px;line-height:20px;font-size:12px;text-align:center;color:#000;font-weight:bold;">0</div>
<div class="t" style="left:1191.5px;top:551.03px;width:94.0px;height:20px;line-height:20px;font-size:12px;text-align:center;color:#000;font-weight:bold;">0</div>
<div class="t" style="left:1285.5px;top:551.03px;width:115.0px;height:20px;line-height:20px;font-size:12px;text-align:center;color:#000;font-weight:bold;">0</div>
<div class="t" style="left:1400.5px;top:551.03px;width:108.0px;height:20px;line-height:20px;font-size:12px;text-align:center;color:#000;font-weight:bold;">850</div>
<div class="t" style="left:1508.5px;top:551.03px;width:102.0px;height:20px;line-height:20px;font-size:12px;text-align:center;color:#000;font-weight:bold;">0</div>
<div class="t" style="left:1610.5px;top:551.03px;width:91.0px;height:20px;line-height:20px;font-size:12px;text-align:center;color:#000;font-weight:bold;">2425</div>
<div class="t" style="left:1701.5px;top:551.03px;width:95.0px;height:20px;line-height:20px;font-size:12px;text-align:center;color:#000;font-weight:bold;">4125</div>
<div class="t" style="left:1796.5px;top:551.03px;width:102.0px;height:20px;line-height:20px;font-size:12px;text-align:center;color:#000;font-weight:bold;">0</div>
<div class="t" style="left:61.95px;top:571.03px;width:160.0px;height:20px;line-height:20px;font-size:12px;text-align:center;color:#000;font-weight:bold;letter-spacing:0.9px;">MHARLITA TRIOS</div>
<div class="t" style="left:221.5px;top:571.03px;width:82.0px;height:20px;line-height:20px;font-size:12px;text-align:center;color:#000;font-weight:bold;">M1-14</div>
<div class="t" style="left:303.5px;top:571.03px;width:164.0px;height:20px;line-height:20px;font-size:12px;text-align:center;color:#000;font-weight:bold;">380</div>
<div class="t" style="left:467.5px;top:571.03px;width:101.0px;height:20px;line-height:20px;font-size:12px;text-align:center;color:#000;font-weight:bold;">540</div>
<div class="t" style="left:568.5px;top:571.03px;width:121.0px;height:20px;line-height:20px;font-size:12px;text-align:center;color:#000;font-weight:bold;">0</div>
<div class="t" style="left:689.5px;top:571.03px;width:91.0px;height:20px;line-height:20px;font-size:12px;text-align:center;color:#000;font-weight:bold;">0</div>
<div class="t" style="left:780.5px;top:571.03px;width:115.0px;height:20px;line-height:20px;font-size:12px;text-align:center;color:#000;font-weight:bold;">0</div>
<div class="t" style="left:895.5px;top:571.03px;width:97.0px;height:20px;line-height:20px;font-size:12px;text-align:center;color:#000;font-weight:bold;">0</div>
<div class="t" style="left:992.5px;top:571.03px;width:111.0px;height:20px;line-height:20px;font-size:12px;text-align:center;color:#000;font-weight:bold;">125</div>
<div class="t" style="left:1103.5px;top:571.03px;width:88.0px;height:20px;line-height:20px;font-size:12px;text-align:center;color:#000;font-weight:bold;">0</div>
<div class="t" style="left:1191.5px;top:571.03px;width:94.0px;height:20px;line-height:20px;font-size:12px;text-align:center;color:#000;font-weight:bold;">0</div>
<div class="t" style="left:1285.5px;top:571.03px;width:115.0px;height:20px;line-height:20px;font-size:12px;text-align:center;color:#000;font-weight:bold;">0</div>
<div class="t" style="left:1400.5px;top:571.03px;width:108.0px;height:20px;line-height:20px;font-size:12px;text-align:center;color:#000;font-weight:bold;">1725</div>
<div class="t" style="left:1508.5px;top:571.03px;width:102.0px;height:20px;line-height:20px;font-size:12px;text-align:center;color:#000;font-weight:bold;">0</div>
<div class="t" style="left:1610.5px;top:571.03px;width:91.0px;height:20px;line-height:20px;font-size:12px;text-align:center;color:#000;font-weight:bold;">1050</div>
<div class="t" style="left:1701.5px;top:571.03px;width:95.0px;height:20px;line-height:20px;font-size:12px;text-align:center;color:#000;font-weight:bold;">6900</div>
<div class="t" style="left:1796.5px;top:571.03px;width:102.0px;height:20px;line-height:20px;font-size:12px;text-align:center;color:#000;font-weight:bold;">0</div>
<div class="t" style="left:61.95px;top:591.03px;width:160.0px;height:20px;line-height:20px;font-size:12px;text-align:center;color:#000;font-weight:bold;letter-spacing:0.9px;">MHARLITA TRIOS</div>
<div class="t" style="left:221.5px;top:591.03px;width:82.0px;height:20px;line-height:20px;font-size:12px;text-align:center;color:#000;font-weight:bold;">M1-15</div>
<div class="t" style="left:303.5px;top:591.03px;width:164.0px;height:20px;line-height:20px;font-size:12px;text-align:center;color:#000;font-weight:bold;">380</div>
<div class="t" style="left:467.5px;top:591.03px;width:101.0px;height:20px;line-height:20px;font-size:12px;text-align:center;color:#000;font-weight:bold;">540</div>
<div class="t" style="left:568.5px;top:591.03px;width:121.0px;height:20px;line-height:20px;font-size:12px;text-align:center;color:#000;font-weight:bold;">0</div>
<div class="t" style="left:689.5px;top:591.03px;width:91.0px;height:20px;line-height:20px;font-size:12px;text-align:center;color:#000;font-weight:bold;">0</div>
<div class="t" style="left:780.5px;top:591.03px;width:115.0px;height:20px;line-height:20px;font-size:12px;text-align:center;color:#000;font-weight:bold;">0</div>
<div class="t" style="left:895.5px;top:591.03px;width:97.0px;height:20px;line-height:20px;font-size:12px;text-align:center;color:#000;font-weight:bold;">0</div>
<div class="t" style="left:992.5px;top:591.03px;width:111.0px;height:20px;line-height:20px;font-size:12px;text-align:center;color:#000;font-weight:bold;">125</div>
<div class="t" style="left:1103.5px;top:591.03px;width:88.0px;height:20px;line-height:20px;font-size:12px;text-align:center;color:#000;font-weight:bold;">0</div>
<div class="t" style="left:1191.5px;top:591.03px;width:94.0px;height:20px;line-height:20px;font-size:12px;text-align:center;color:#000;font-weight:bold;">0</div>
<div class="t" style="left:1285.5px;top:591.03px;width:115.0px;height:20px;line-height:20px;font-size:12px;text-align:center;color:#000;font-weight:bold;">0</div>
<div class="t" style="left:1400.5px;top:591.03px;width:108.0px;height:20px;line-height:20px;font-size:12px;text-align:center;color:#000;font-weight:bold;">1850</div>
<div class="t" style="left:1508.5px;top:591.03px;width:102.0px;height:20px;line-height:20px;font-size:12px;text-align:center;color:#000;font-weight:bold;">0</div>
<div class="t" style="left:1610.5px;top:591.03px;width:91.0px;height:20px;line-height:20px;font-size:12px;text-align:center;color:#000;font-weight:bold;">975</div>
<div class="t" style="left:1701.5px;top:591.03px;width:95.0px;height:20px;line-height:20px;font-size:12px;text-align:center;color:#000;font-weight:bold;">7000</div>
<div class="t" style="left:1796.5px;top:591.03px;width:102.0px;height:20px;line-height:20px;font-size:12px;text-align:center;color:#000;font-weight:bold;">0</div>
<div class="t" style="left:61.95px;top:611.03px;width:160.0px;height:20px;line-height:20px;font-size:12px;text-align:center;color:#000;font-weight:bold;letter-spacing:0.9px;">MHARLITA TRIOS</div>
<div class="t" style="left:221.5px;top:611.03px;width:82.0px;height:20px;line-height:20px;font-size:12px;text-align:center;color:#000;font-weight:bold;">M1-16</div>
<div class="t" style="left:303.5px;top:611.03px;width:164.0px;height:20px;line-height:20px;font-size:12px;text-align:center;color:#000;font-weight:bold;">580</div>
<div class="t" style="left:467.5px;top:611.03px;width:101.0px;height:20px;line-height:20px;font-size:12px;text-align:center;color:#000;font-weight:bold;">560</div>
<div class="t" style="left:568.5px;top:611.03px;width:121.0px;height:20px;line-height:20px;font-size:12px;text-align:center;color:#000;font-weight:bold;">40</div>
<div class="t" style="left:689.5px;top:611.03px;width:91.0px;height:20px;line-height:20px;font-size:12px;text-align:center;color:#000;font-weight:bold;">0</div>
<div class="t" style="left:780.5px;top:611.03px;width:115.0px;height:20px;line-height:20px;font-size:12px;text-align:center;color:#000;font-weight:bold;">0</div>
<div class="t" style="left:895.5px;top:611.03px;width:97.0px;height:20px;line-height:20px;font-size:12px;text-align:center;color:#000;font-weight:bold;">0</div>
<div class="t" style="left:992.5px;top:611.03px;width:111.0px;height:20px;line-height:20px;font-size:12px;text-align:center;color:#000;font-weight:bold;">125</div>
<div class="t" style="left:1103.5px;top:611.03px;width:88.0px;height:20px;line-height:20px;font-size:12px;text-align:center;color:#000;font-weight:bold;">0</div>
<div class="t" style="left:1191.5px;top:611.03px;width:94.0px;height:20px;line-height:20px;font-size:12px;text-align:center;color:#000;font-weight:bold;">0</div>
<div class="t" style="left:1285.5px;top:611.03px;width:115.0px;height:20px;line-height:20px;font-size:12px;text-align:center;color:#000;font-weight:bold;">0</div>
<div class="t" style="left:1400.5px;top:611.03px;width:108.0px;height:20px;line-height:20px;font-size:12px;text-align:center;color:#000;font-weight:bold;">1675</div>
<div class="t" style="left:1508.5px;top:611.03px;width:102.0px;height:20px;line-height:20px;font-size:12px;text-align:center;color:#000;font-weight:bold;">0</div>
<div class="t" style="left:1610.5px;top:611.03px;width:91.0px;height:20px;line-height:20px;font-size:12px;text-align:center;color:#000;font-weight:bold;">1250</div>
<div class="t" style="left:1701.5px;top:611.03px;width:95.0px;height:20px;line-height:20px;font-size:12px;text-align:center;color:#000;font-weight:bold;">6425</div>
<div class="t" style="left:1796.5px;top:611.03px;width:102.0px;height:20px;line-height:20px;font-size:12px;text-align:center;color:#000;font-weight:bold;">0</div>
<svg style="position:absolute;left:993px;top:550px" width="8" height="8"><path d="M0 0H7L0 7Z" fill="#008000"/></svg>
<div class="t" style="left:61.5px;top:671.03px;width:1843.0px;height:20px;line-height:20px;font-size:12px;text-align:center;color:#000;font-weight:bold;"></div>
<div class="t" style="left:1094px;top:671.03px;width:400px;height:20px;line-height:20px;font-size:12px;font-weight:bold;text-align:center;letter-spacing:0.6px;">Cost of Feeds CONSUMED PER CAGE</div>
<div class="t" style="left:61.825px;top:691.03px;width:160.0px;height:20px;line-height:20px;font-size:12px;text-align:center;color:#000;font-style:italic;letter-spacing:0.65px;-webkit-text-stroke:0.4px #000;">Feeder</div>
<div class="t" style="left:221.85px;top:691.03px;width:82.00000000000003px;height:20px;line-height:20px;font-size:12px;text-align:center;color:#000;font-style:italic;letter-spacing:0.7px;-webkit-text-stroke:0.4px #000;">Cage</div>
<div class="t" style="left:304.025px;top:691.03px;width:982.0000000000001px;height:20px;line-height:20px;font-size:12px;text-align:center;color:#000;font-style:italic;letter-spacing:1.05px;-webkit-text-stroke:0.4px #000;">SANTEH</div>
<div class="t" style="left:1751.1px;top:691.03px;width:120.0px;height:20px;line-height:20px;font-size:12px;text-align:center;color:#000;font-style:italic;letter-spacing:1.2px;-webkit-text-stroke:0.4px #000;">JULU</div>
<div class="t" style="left:303.9px;top:711.03px;width:164.0px;height:20px;line-height:20px;font-size:12px;text-align:center;color:#c24e0a;font-style:italic;letter-spacing:0.8px;-webkit-text-stroke:0.35px #c24e0a;">PS-1</div>
<div class="t" style="left:467.9px;top:711.03px;width:101.0px;height:20px;line-height:20px;font-size:12px;text-align:center;color:#c24e0a;font-style:italic;letter-spacing:0.8px;-webkit-text-stroke:0.35px #c24e0a;">PS-2</div>
<div class="t" style="left:568.9px;top:711.03px;width:121.0px;height:20px;line-height:20px;font-size:12px;text-align:center;color:#c24e0a;font-style:italic;letter-spacing:0.8px;-webkit-text-stroke:0.35px #c24e0a;">C1</div>
<div class="t" style="left:689.9px;top:711.03px;width:91.0px;height:20px;line-height:20px;font-size:12px;text-align:center;color:#c24e0a;font-style:italic;letter-spacing:0.8px;-webkit-text-stroke:0.35px #c24e0a;">C2</div>
<div class="t" style="left:780.9px;top:711.03px;width:115.0px;height:20px;line-height:20px;font-size:12px;text-align:center;color:#c24e0a;font-style:italic;letter-spacing:0.8px;-webkit-text-stroke:0.35px #c24e0a;">Star</div>
<div class="t" style="left:895.9px;top:711.03px;width:97.0px;height:20px;line-height:20px;font-size:12px;text-align:center;color:#c24e0a;font-style:italic;letter-spacing:0.8px;-webkit-text-stroke:0.35px #c24e0a;">Grw Sink</div>
<div class="t" style="left:992.9px;top:711.03px;width:111.00000000000011px;height:20px;line-height:20px;font-size:12px;text-align:center;color:#c24e0a;font-style:italic;letter-spacing:0.8px;-webkit-text-stroke:0.35px #c24e0a;">Grow Float</div>
<div class="t" style="left:1103.9px;top:711.03px;width:88.0px;height:20px;line-height:20px;font-size:12px;text-align:center;color:#c24e0a;font-style:italic;letter-spacing:0.8px;-webkit-text-stroke:0.35px #c24e0a;">Fin Sink</div>
<div class="t" style="left:1191.9px;top:711.03px;width:94.0px;height:20px;line-height:20px;font-size:12px;text-align:center;color:#c24e0a;font-style:italic;letter-spacing:0.8px;-webkit-text-stroke:0.35px #c24e0a;">Fin Float</div>
<div class="t" style="left:1285.9px;top:711.03px;width:115.0px;height:20px;line-height:20px;font-size:12px;text-align:center;color:#c24e0a;font-style:italic;letter-spacing:0.8px;-webkit-text-stroke:0.35px #c24e0a;">Jul Crumble</div>
<div class="t" style="left:1400.9px;top:711.03px;width:108.0px;height:20px;line-height:20px;font-size:12px;text-align:center;color:#c24e0a;font-style:italic;letter-spacing:0.8px;-webkit-text-stroke:0.35px #c24e0a;">Starter SK</div>
<div class="t" style="left:1508.9px;top:711.03px;width:102.0px;height:20px;line-height:20px;font-size:12px;text-align:center;color:#c24e0a;font-style:italic;letter-spacing:0.8px;-webkit-text-stroke:0.35px #c24e0a;">Starter FL</div>
<div class="t" style="left:1610.9px;top:711.03px;width:91.0px;height:20px;line-height:20px;font-size:12px;text-align:center;color:#c24e0a;font-style:italic;letter-spacing:0.8px;-webkit-text-stroke:0.35px #c24e0a;">Juv Sink</div>
<div class="t" style="left:1701.9px;top:711.03px;width:95.0px;height:20px;line-height:20px;font-size:12px;text-align:center;color:#c24e0a;font-style:italic;letter-spacing:0.8px;-webkit-text-stroke:0.35px #c24e0a;">Juv Float</div>
<div class="t" style="left:1796.9px;top:711.03px;width:102.0px;height:20px;line-height:20px;font-size:12px;text-align:center;color:#c24e0a;font-style:italic;letter-spacing:0.8px;-webkit-text-stroke:0.35px #c24e0a;">Adult Sink</div>
<div class="t" style="left:61px;top:731.03px;width:242px;height:20px;line-height:20px;font-size:12px;text-align:right;color:#000;font-weight:bold;padding-right:8px;box-sizing:border-box;letter-spacing:0.37px;">PRICE/BAG</div>
<div class="t" style="left:303px;top:731.03px;width:164px;height:20px;line-height:20px;font-size:12px;text-align:right;color:#b08400;font-weight:bold;padding-right:6.5px;box-sizing:border-box;letter-spacing:0.2px;">816.00</div>
<div class="t" style="left:467px;top:731.03px;width:101px;height:20px;line-height:20px;font-size:12px;text-align:right;color:#b08400;font-weight:bold;padding-right:6.5px;box-sizing:border-box;letter-spacing:0.2px;">778.00</div>
<div class="t" style="left:568px;top:731.03px;width:121px;height:20px;line-height:20px;font-size:12px;text-align:right;color:#b08400;font-weight:bold;padding-right:6.5px;box-sizing:border-box;letter-spacing:0.2px;">649.00</div>
<div class="t" style="left:689px;top:731.03px;width:91px;height:20px;line-height:20px;font-size:12px;text-align:right;color:#b08400;font-weight:bold;padding-right:6.5px;box-sizing:border-box;letter-spacing:0.2px;">649.00</div>
<div class="t" style="left:780px;top:731.03px;width:115px;height:20px;line-height:20px;font-size:12px;text-align:right;color:#b08400;font-weight:bold;padding-right:6.5px;box-sizing:border-box;letter-spacing:0.2px;">622.20</div>
<div class="t" style="left:895px;top:731.03px;width:97px;height:20px;line-height:20px;font-size:12px;text-align:right;color:#b08400;font-weight:bold;padding-right:6.5px;box-sizing:border-box;letter-spacing:0.2px;">755.50</div>
<div class="t" style="left:992px;top:731.03px;width:111px;height:20px;line-height:20px;font-size:12px;text-align:right;color:#b08400;font-weight:bold;padding-right:6.5px;box-sizing:border-box;letter-spacing:0.2px;">765.50</div>
<div class="t" style="left:1103px;top:731.03px;width:88px;height:20px;line-height:20px;font-size:12px;text-align:right;color:#b08400;font-weight:bold;padding-right:6.5px;box-sizing:border-box;letter-spacing:0.2px;">738.00</div>
<div class="t" style="left:1191px;top:731.03px;width:94px;height:20px;line-height:20px;font-size:12px;text-align:right;color:#b08400;font-weight:bold;padding-right:6.5px;box-sizing:border-box;letter-spacing:0.2px;">755.50</div>
<div class="t" style="left:1285px;top:731.03px;width:115px;height:20px;line-height:20px;font-size:12px;text-align:right;color:#b08400;font-weight:bold;padding-right:6.5px;box-sizing:border-box;letter-spacing:0.2px;">825.00</div>
<div class="t" style="left:1400px;top:731.03px;width:108px;height:20px;line-height:20px;font-size:12px;text-align:right;color:#b08400;font-weight:bold;padding-right:6.5px;box-sizing:border-box;letter-spacing:0.2px;">805.00</div>
<div class="t" style="left:1508px;top:731.03px;width:102px;height:20px;line-height:20px;font-size:12px;text-align:right;color:#b08400;font-weight:bold;padding-right:6.5px;box-sizing:border-box;letter-spacing:0.2px;">805.00</div>
<div class="t" style="left:1610px;top:731.03px;width:91px;height:20px;line-height:20px;font-size:12px;text-align:right;color:#b08400;font-weight:bold;padding-right:6.5px;box-sizing:border-box;letter-spacing:0.2px;">769.00</div>
<div class="t" style="left:1701px;top:731.03px;width:95px;height:20px;line-height:20px;font-size:12px;text-align:right;color:#b08400;font-weight:bold;padding-right:6.5px;box-sizing:border-box;letter-spacing:0.2px;">779.00</div>
<div class="t" style="left:1796px;top:731.03px;width:102px;height:20px;line-height:20px;font-size:12px;text-align:right;color:#b08400;font-weight:bold;padding-right:6.5px;box-sizing:border-box;letter-spacing:0.2px;">759.00</div>
<div class="t" style="left:61.95px;top:751.03px;width:160.0px;height:20px;line-height:20px;font-size:12px;text-align:center;color:#000;font-weight:bold;letter-spacing:0.9px;">MHARLITA TRIOS</div>
<div class="t" style="left:221.5px;top:751.03px;width:82.0px;height:20px;line-height:20px;font-size:12px;text-align:center;color:#000;font-weight:bold;">M1-13</div>
<div class="t" style="left:303px;top:751.03px;width:164px;height:20px;line-height:20px;font-size:12px;text-align:right;color:#000;font-weight:bold;padding-right:6.5px;box-sizing:border-box;letter-spacing:0.2px;">57,120.00</div>
<div class="t" style="left:467px;top:751.03px;width:101px;height:20px;line-height:20px;font-size:12px;text-align:right;color:#000;font-weight:bold;padding-right:21px;box-sizing:border-box;">-</div>
<div class="t" style="left:568px;top:751.03px;width:121px;height:20px;line-height:20px;font-size:12px;text-align:right;color:#000;font-weight:bold;padding-right:21px;box-sizing:border-box;">-</div>
<div class="t" style="left:689px;top:751.03px;width:91px;height:20px;line-height:20px;font-size:12px;text-align:right;color:#000;font-weight:bold;padding-right:21px;box-sizing:border-box;">-</div>
<div class="t" style="left:780px;top:751.03px;width:115px;height:20px;line-height:20px;font-size:12px;text-align:right;color:#000;font-weight:bold;padding-right:21px;box-sizing:border-box;">-</div>
<div class="t" style="left:895px;top:751.03px;width:97px;height:20px;line-height:20px;font-size:12px;text-align:right;color:#000;font-weight:bold;padding-right:21px;box-sizing:border-box;">-</div>
<div class="t" style="left:992px;top:751.03px;width:111px;height:20px;line-height:20px;font-size:12px;text-align:right;color:#000;font-weight:bold;padding-right:21px;box-sizing:border-box;">-</div>
<div class="t" style="left:1103px;top:751.03px;width:88px;height:20px;line-height:20px;font-size:12px;text-align:right;color:#000;font-weight:bold;padding-right:21px;box-sizing:border-box;">-</div>
<div class="t" style="left:1191px;top:751.03px;width:94px;height:20px;line-height:20px;font-size:12px;text-align:right;color:#000;font-weight:bold;padding-right:21px;box-sizing:border-box;">-</div>
<div class="t" style="left:1285px;top:751.03px;width:115px;height:20px;line-height:20px;font-size:12px;text-align:right;color:#000;font-weight:bold;padding-right:21px;box-sizing:border-box;">-</div>
<div class="t" style="left:1400px;top:751.03px;width:108px;height:20px;line-height:20px;font-size:12px;text-align:right;color:#000;font-weight:bold;padding-right:6.5px;box-sizing:border-box;letter-spacing:0.2px;">27,370.00</div>
<div class="t" style="left:1508px;top:751.03px;width:102px;height:20px;line-height:20px;font-size:12px;text-align:right;color:#000;font-weight:bold;padding-right:21px;box-sizing:border-box;">-</div>
<div class="t" style="left:1610px;top:751.03px;width:91px;height:20px;line-height:20px;font-size:12px;text-align:right;color:#000;font-weight:bold;padding-right:6.5px;box-sizing:border-box;letter-spacing:0.2px;">74,593.00</div>
<div class="t" style="left:1701px;top:751.03px;width:95px;height:20px;line-height:20px;font-size:12px;text-align:right;color:#000;font-weight:bold;padding-right:6.5px;box-sizing:border-box;letter-spacing:0.2px;">128,535.00</div>
<div class="t" style="left:1796px;top:751.03px;width:102px;height:20px;line-height:20px;font-size:12px;text-align:right;color:#000;font-weight:bold;padding-right:21px;box-sizing:border-box;">-</div>
<div class="t" style="left:61.95px;top:771.03px;width:160.0px;height:20px;line-height:20px;font-size:12px;text-align:center;color:#000;font-weight:bold;letter-spacing:0.9px;">MHARLITA TRIOS</div>
<div class="t" style="left:221.5px;top:771.03px;width:82.0px;height:20px;line-height:20px;font-size:12px;text-align:center;color:#000;font-weight:bold;">M1-14</div>
<div class="t" style="left:303px;top:771.03px;width:164px;height:20px;line-height:20px;font-size:12px;text-align:right;color:#000;font-weight:bold;padding-right:6.5px;box-sizing:border-box;letter-spacing:0.2px;">15,504.00</div>
<div class="t" style="left:467px;top:771.03px;width:101px;height:20px;line-height:20px;font-size:12px;text-align:right;color:#000;font-weight:bold;padding-right:6.5px;box-sizing:border-box;letter-spacing:0.2px;">21,006.00</div>
<div class="t" style="left:568px;top:771.03px;width:121px;height:20px;line-height:20px;font-size:12px;text-align:right;color:#000;font-weight:bold;padding-right:21px;box-sizing:border-box;">-</div>
<div class="t" style="left:689px;top:771.03px;width:91px;height:20px;line-height:20px;font-size:12px;text-align:right;color:#000;font-weight:bold;padding-right:21px;box-sizing:border-box;">-</div>
<div class="t" style="left:780px;top:771.03px;width:115px;height:20px;line-height:20px;font-size:12px;text-align:right;color:#000;font-weight:bold;padding-right:21px;box-sizing:border-box;">-</div>
<div class="t" style="left:895px;top:771.03px;width:97px;height:20px;line-height:20px;font-size:12px;text-align:right;color:#000;font-weight:bold;padding-right:21px;box-sizing:border-box;">-</div>
<div class="t" style="left:992px;top:771.03px;width:111px;height:20px;line-height:20px;font-size:12px;text-align:right;color:#000;font-weight:bold;padding-right:6.5px;box-sizing:border-box;letter-spacing:0.2px;">3,827.50</div>
<div class="t" style="left:1103px;top:771.03px;width:88px;height:20px;line-height:20px;font-size:12px;text-align:right;color:#000;font-weight:bold;padding-right:21px;box-sizing:border-box;">-</div>
<div class="t" style="left:1191px;top:771.03px;width:94px;height:20px;line-height:20px;font-size:12px;text-align:right;color:#000;font-weight:bold;padding-right:21px;box-sizing:border-box;">-</div>
<div class="t" style="left:1285px;top:771.03px;width:115px;height:20px;line-height:20px;font-size:12px;text-align:right;color:#000;font-weight:bold;padding-right:21px;box-sizing:border-box;">-</div>
<div class="t" style="left:1400px;top:771.03px;width:108px;height:20px;line-height:20px;font-size:12px;text-align:right;color:#000;font-weight:bold;padding-right:6.5px;box-sizing:border-box;letter-spacing:0.2px;">55,545.00</div>
<div class="t" style="left:1508px;top:771.03px;width:102px;height:20px;line-height:20px;font-size:12px;text-align:right;color:#000;font-weight:bold;padding-right:21px;box-sizing:border-box;">-</div>
<div class="t" style="left:1610px;top:771.03px;width:91px;height:20px;line-height:20px;font-size:12px;text-align:right;color:#000;font-weight:bold;padding-right:6.5px;box-sizing:border-box;letter-spacing:0.2px;">32,298.00</div>
<div class="t" style="left:1701px;top:771.03px;width:95px;height:20px;line-height:20px;font-size:12px;text-align:right;color:#000;font-weight:bold;padding-right:6.5px;box-sizing:border-box;letter-spacing:0.2px;">215,004.00</div>
<div class="t" style="left:1796px;top:771.03px;width:102px;height:20px;line-height:20px;font-size:12px;text-align:right;color:#000;font-weight:bold;padding-right:21px;box-sizing:border-box;">-</div>
<div class="t" style="left:61.95px;top:791.03px;width:160.0px;height:20px;line-height:20px;font-size:12px;text-align:center;color:#000;font-weight:bold;letter-spacing:0.9px;">MHARLITA TRIOS</div>
<div class="t" style="left:221.5px;top:791.03px;width:82.0px;height:20px;line-height:20px;font-size:12px;text-align:center;color:#000;font-weight:bold;">M1-15</div>
<div class="t" style="left:303px;top:791.03px;width:164px;height:20px;line-height:20px;font-size:12px;text-align:right;color:#000;font-weight:bold;padding-right:6.5px;box-sizing:border-box;letter-spacing:0.2px;">15,504.00</div>
<div class="t" style="left:467px;top:791.03px;width:101px;height:20px;line-height:20px;font-size:12px;text-align:right;color:#000;font-weight:bold;padding-right:6.5px;box-sizing:border-box;letter-spacing:0.2px;">21,006.00</div>
<div class="t" style="left:568px;top:791.03px;width:121px;height:20px;line-height:20px;font-size:12px;text-align:right;color:#000;font-weight:bold;padding-right:21px;box-sizing:border-box;">-</div>
<div class="t" style="left:689px;top:791.03px;width:91px;height:20px;line-height:20px;font-size:12px;text-align:right;color:#000;font-weight:bold;padding-right:21px;box-sizing:border-box;">-</div>
<div class="t" style="left:780px;top:791.03px;width:115px;height:20px;line-height:20px;font-size:12px;text-align:right;color:#000;font-weight:bold;padding-right:21px;box-sizing:border-box;">-</div>
<div class="t" style="left:895px;top:791.03px;width:97px;height:20px;line-height:20px;font-size:12px;text-align:right;color:#000;font-weight:bold;padding-right:21px;box-sizing:border-box;">-</div>
<div class="t" style="left:992px;top:791.03px;width:111px;height:20px;line-height:20px;font-size:12px;text-align:right;color:#000;font-weight:bold;padding-right:6.5px;box-sizing:border-box;letter-spacing:0.2px;">3,827.50</div>
<div class="t" style="left:1103px;top:791.03px;width:88px;height:20px;line-height:20px;font-size:12px;text-align:right;color:#000;font-weight:bold;padding-right:21px;box-sizing:border-box;">-</div>
<div class="t" style="left:1191px;top:791.03px;width:94px;height:20px;line-height:20px;font-size:12px;text-align:right;color:#000;font-weight:bold;padding-right:21px;box-sizing:border-box;">-</div>
<div class="t" style="left:1285px;top:791.03px;width:115px;height:20px;line-height:20px;font-size:12px;text-align:right;color:#000;font-weight:bold;padding-right:6.5px;box-sizing:border-box;letter-spacing:0.2px;">825.00</div>
<div class="t" style="left:1400px;top:791.03px;width:108px;height:20px;line-height:20px;font-size:12px;text-align:right;color:#000;font-weight:bold;padding-right:6.5px;box-sizing:border-box;letter-spacing:0.2px;">59,570.00</div>
<div class="t" style="left:1508px;top:791.03px;width:102px;height:20px;line-height:20px;font-size:12px;text-align:right;color:#000;font-weight:bold;padding-right:21px;box-sizing:border-box;">-</div>
<div class="t" style="left:1610px;top:791.03px;width:91px;height:20px;line-height:20px;font-size:12px;text-align:right;color:#000;font-weight:bold;padding-right:6.5px;box-sizing:border-box;letter-spacing:0.2px;">29,991.00</div>
<div class="t" style="left:1701px;top:791.03px;width:95px;height:20px;line-height:20px;font-size:12px;text-align:right;color:#000;font-weight:bold;padding-right:6.5px;box-sizing:border-box;letter-spacing:0.2px;">218,120.00</div>
<div class="t" style="left:1796px;top:791.03px;width:102px;height:20px;line-height:20px;font-size:12px;text-align:right;color:#000;font-weight:bold;padding-right:21px;box-sizing:border-box;">-</div>
<div style="left:1904px;top:105px;width:9px;height:704px;background:linear-gradient(90deg,#d0d5db,#dfe3e8);"></div>
<div style="left:1904px;top:105px;width:1px;height:704px;background:#9ea5ae;"></div>
<div style="left:1906px;top:107px;width:8px;height:10px;background:#fff;border:1px solid #8d949d;box-sizing:border-box;"></div>
<svg style="position:absolute;left:1908px;top:129px" width="5" height="6"><path d="M5 0V5H0Z" fill="#2d2d2d"/></svg>
<div style="left:1905px;top:143px;width:9px;height:666px;background:linear-gradient(90deg,#f3f4f6,#e6e9ed);border-left:1px solid #a2a9b1;border-top:1px solid #a2a9b1;box-sizing:border-box;"></div>
<div style="left:1911px;top:505px;width:2px;height:1px;background:#7d858e;"></div>
<div style="left:1911px;top:507px;width:2px;height:1px;background:#7d858e;"></div>
<div style="left:1911px;top:509px;width:2px;height:1px;background:#7d858e;"></div>
<div style="left:1911px;top:511px;width:2px;height:1px;background:#7d858e;"></div>
<div style="left:0px;top:809px;width:1913px;height:2px;background:#a3aab3;"></div>
<div style="left:0px;top:811px;width:1913px;height:8px;background:#dde1e6;"></div>
<div style="left:61px;top:811px;width:1px;height:8px;background:#b5bbc2;"></div>
<div style="left:1571px;top:811px;width:1px;height:8px;background:#b5bbc2;"></div>
<div style="left:1576px;top:812px;width:28px;height:12px;background:#ffd966;border:1px solid #d7a53d;border-radius:3px;box-sizing:border-box;"></div>
<div style="left:1607px;top:817px;width:21px;height:2px;background:#6e6e6e;"></div>
<div style="left:1635px;top:817px;width:21px;height:2px;background:#6e6e6e;"></div>
<div style="left:1720px;top:813px;width:21px;height:21px;border:1px solid #8a9199;border-radius:50%;background:#eef0f3;box-sizing:border-box;"></div>
<div style="left:1773px;top:816px;width:13px;height:6px;border:1px solid #7b828a;background:#f1f3f5;box-sizing:border-box;"></div>
<div style="left:1893px;top:813px;width:21px;height:21px;border:1px solid #8a9199;border-radius:50%;background:#eef0f3;box-sizing:border-box;"></div>
</body></html>
